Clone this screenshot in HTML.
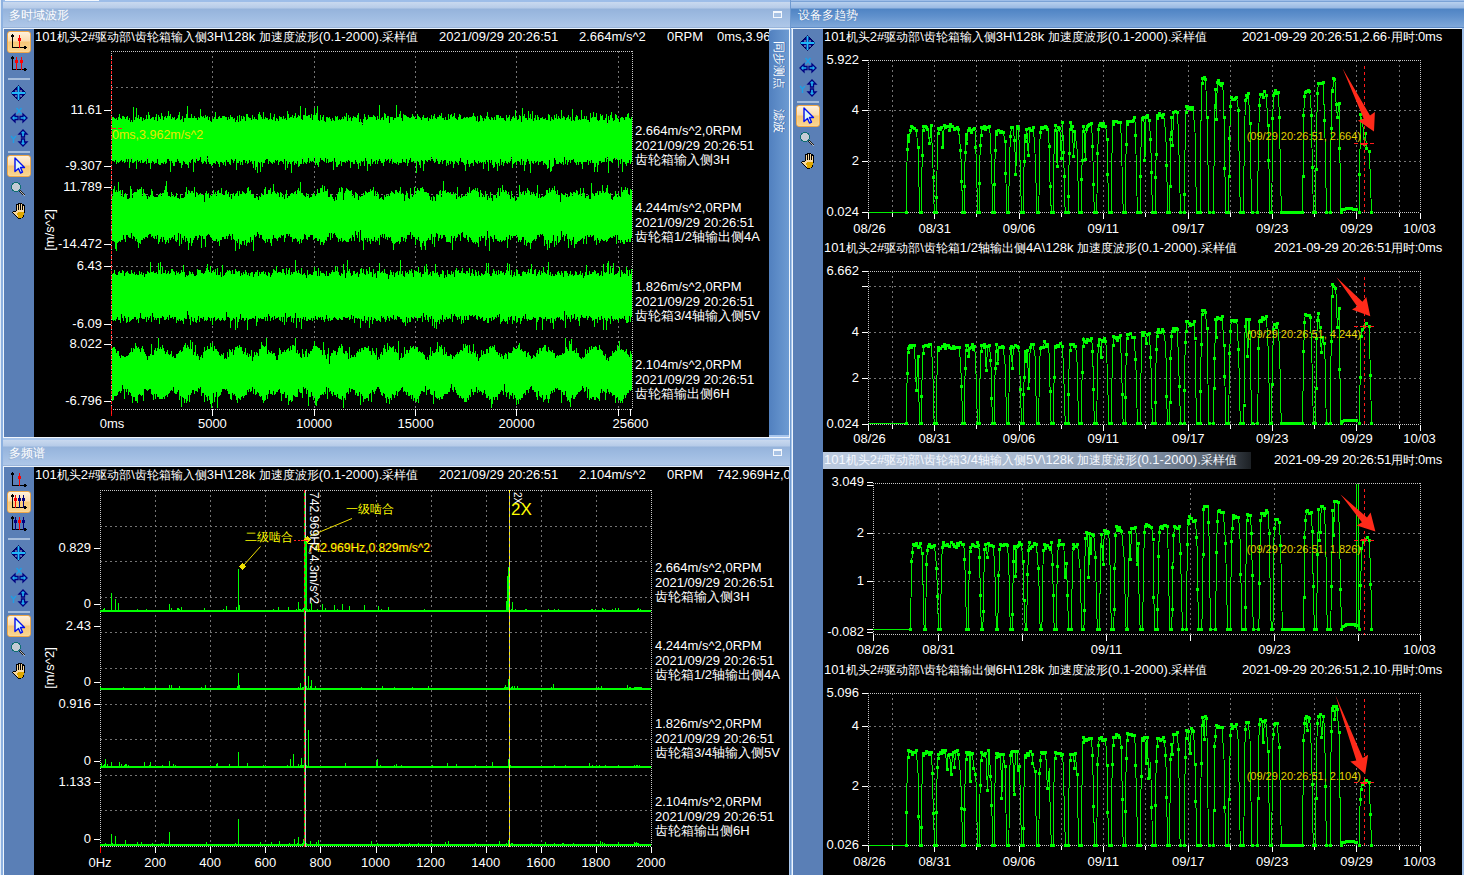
<!DOCTYPE html><html><head><meta charset="utf-8"><style>
html,body{margin:0;padding:0;width:1464px;height:875px;overflow:hidden;background:#a4c2e8;font-family:"Liberation Sans",sans-serif;}
.t{position:absolute;white-space:pre;line-height:15px;font-size:13px;}
.t i{font-style:normal;font-size:12px;}
.t.c13 i{font-size:13.2px;}
svg{position:absolute;left:0;top:0;}
</style></head><body>
<div style="position:absolute;left:0px;top:0px;width:1464px;height:875px;background:#a9c6ec;"></div>
<div style="position:absolute;left:0px;top:0px;width:1464px;height:2px;background:#9dbde8;"></div>
<div style="position:absolute;left:5px;top:0px;width:94px;height:1px;background:#f4f8fd;"></div>
<div style="position:absolute;left:0px;top:0px;width:1px;height:875px;background:#e2ecf8;"></div>
<div style="position:absolute;left:1px;top:0px;width:2px;height:875px;background:#8db1e0;"></div>
<div style="position:absolute;left:3px;top:28px;width:1px;height:410px;background:#eef5fc;"></div>
<div style="position:absolute;left:3px;top:466px;width:1px;height:409px;background:#eef5fc;"></div>
<div style="position:absolute;left:3px;top:2px;width:787px;height:25px;background:linear-gradient(to bottom,#c9d9ef 0px,#b6cbe8 6px,#95b3db 7px,#9ebbe1 14px,#aec7e8 25px);"></div>
<div style="position:absolute;left:3px;top:440px;width:787px;height:25px;background:linear-gradient(to bottom,#c9d9ef 0px,#b6cbe8 6px,#95b3db 7px,#9ebbe1 14px,#aec7e8 25px);"></div>
<div style="position:absolute;left:791px;top:2px;width:673px;height:25px;background:linear-gradient(to bottom,#b8d0ee 0px,#98b8e2 6px,#4f84c4 7px,#5f90cc 14px,#7fa8da 25px);"></div>
<div style="position:absolute;left:791px;top:1px;width:673px;height:1px;background:#7aa2d6;"></div>
<div style="position:absolute;left:790px;top:0px;width:1px;height:875px;background:#6f9ad0;"></div>
<div style="position:absolute;left:3px;top:27px;width:787px;height:1px;background:#98b4da;"></div>
<div style="position:absolute;left:3px;top:28px;width:787px;height:1px;background:#eaf2fb;"></div>
<div style="position:absolute;left:3px;top:465px;width:787px;height:1px;background:#98b4da;"></div>
<div style="position:absolute;left:3px;top:466px;width:787px;height:1px;background:#eaf2fb;"></div>
<div style="position:absolute;left:791px;top:27px;width:673px;height:1px;background:#5e8cc8;"></div>
<div style="position:absolute;left:791px;top:28px;width:673px;height:1px;background:#e6f0fb;"></div>
<div style="position:absolute;left:3px;top:437px;width:787px;height:1px;background:#f2f7fd;"></div>
<div style="position:absolute;left:789px;top:28px;width:1px;height:410px;background:#eef5fc;"></div>
<div style="position:absolute;left:792px;top:28px;width:1px;height:847px;background:#eef5fc;"></div>
<div style="position:absolute;left:4px;top:29px;width:30px;height:408px;background:#5a7fb6;"></div>
<div style="position:absolute;left:34px;top:29px;width:735px;height:408px;background:#000;"></div>
<div style="position:absolute;left:4px;top:467px;width:30px;height:408px;background:#5a7fb6;"></div>
<div style="position:absolute;left:34px;top:467px;width:755px;height:408px;background:#000;"></div>
<div style="position:absolute;left:793px;top:29px;width:30px;height:846px;background:#5a7fb6;"></div>
<div style="position:absolute;left:823px;top:29px;width:639px;height:846px;background:#000;"></div>
<div style="position:absolute;left:1462px;top:28px;width:2px;height:847px;background:#9dbde6;"></div>
<div style="position:absolute;left:769px;top:30px;width:20px;height:405px;background:linear-gradient(to right,#5180bf,#6d9bd2);border-top-left-radius:4px;"></div>
<div class="t" style="left:779px;top:65px;transform:translate(-50%,-50%) rotate(90deg);color:#fff;text-shadow:0 -1px 0 #3c68a8"><i>同步测点</i></div>
<div class="t" style="left:779px;top:120.5px;transform:translate(-50%,-50%) rotate(90deg);color:#fff;text-shadow:0 -1px 0 #3c68a8"><i>滤波</i></div>
<div class="t" style="left:9px;top:7px;color:#fff;text-shadow:-1px 1px 0 #98b0d0"><i>多时域波形</i></div>
<div class="t" style="left:9px;top:445px;color:#fff;text-shadow:-1px 1px 0 #98b0d0"><i>多频谱</i></div>
<div class="t" style="left:798px;top:7px;color:#fff;text-shadow:0 0 1px #3a6aa8"><i>设备多趋势</i></div>
<div style="position:absolute;left:773px;top:11px;width:7px;height:4px;border:1px solid #f4f8fd;border-top-width:2px;background:#a8c2e4"></div>
<div style="position:absolute;left:773px;top:449px;width:7px;height:4px;border:1px solid #f4f8fd;border-top-width:2px;background:#a8c2e4"></div>
<div style="position:absolute;left:7px;top:31px;width:22px;height:20px;border:1px solid #f0a848;border-radius:3px;background:linear-gradient(to bottom,#fff1dc 0%,#fbdcae 45%,#f8c878 50%,#f9d590 100%);box-shadow:inset 0 0 1px #fff"></div>
<div style="position:absolute;left:8px;top:78px;width:22px;height:2px;background:#a6bddc;"></div>
<div style="position:absolute;left:8px;top:151px;width:22px;height:2px;background:#a6bddc;"></div>
<div style="position:absolute;left:7px;top:155px;width:22px;height:20px;border:1px solid #f0a848;border-radius:3px;background:linear-gradient(to bottom,#fff1dc 0%,#fbdcae 45%,#f8c878 50%,#f9d590 100%);box-shadow:inset 0 0 1px #fff"></div>
<div style="position:absolute;left:7px;top:491px;width:22px;height:20px;border:1px solid #f0a848;border-radius:3px;background:linear-gradient(to bottom,#fff1dc 0%,#fbdcae 45%,#f8c878 50%,#f9d590 100%);box-shadow:inset 0 0 1px #fff"></div>
<div style="position:absolute;left:8px;top:538px;width:22px;height:2px;background:#a6bddc;"></div>
<div style="position:absolute;left:8px;top:611px;width:22px;height:2px;background:#a6bddc;"></div>
<div style="position:absolute;left:7px;top:615px;width:22px;height:20px;border:1px solid #f0a848;border-radius:3px;background:linear-gradient(to bottom,#fff1dc 0%,#fbdcae 45%,#f8c878 50%,#f9d590 100%);box-shadow:inset 0 0 1px #fff"></div>
<div style="position:absolute;left:797px;top:101px;width:22px;height:2px;background:#a6bddc;"></div>
<div style="position:absolute;left:796px;top:105px;width:22px;height:20px;border:1px solid #f0a848;border-radius:3px;background:linear-gradient(to bottom,#fff1dc 0%,#fbdcae 45%,#f8c878 50%,#f9d590 100%);box-shadow:inset 0 0 1px #fff"></div>
<div style="position:absolute;left:823px;top:452px;width:428px;height:17px;background:linear-gradient(to right,#bccbe0 0%,#a9b9cf 45%,#8696ac 75%,#505a66 92%,#1c2024 100%);"></div>
<svg width="1464" height="875" viewBox="0 0 1464 875" shape-rendering="crispEdges"><path d="M12.5 34V47.5H27" stroke="#000" stroke-width="1.5" fill="none"/><path d="M11.0 36h3M25 46.0v3" stroke="#000" stroke-width="1.2"/><path d="M19.5 34.5V47.5" stroke="#f00" stroke-width="1.5"/><rect x="17.7" y="38" width="3.6" height="2.6" fill="#f00"/><path d="M12.5 56V69.5H27" stroke="#000" stroke-width="1.5" fill="none"/><path d="M11.0 58h3M25 68.0v3" stroke="#000" stroke-width="1.2"/><path d="M16.5 56.5V69.5" stroke="#f00" stroke-width="1.5"/><rect x="14.7" y="60" width="3.6" height="2.6" fill="#f00"/><path d="M21.5 56.5V69.5" stroke="#f00" stroke-width="1.5"/><rect x="19.7" y="60" width="3.6" height="2.6" fill="#f00"/><path d="M18.5 85.5L26.0 93L18.5 100.5L11.0 93Z" fill="#000080" stroke="#000050" stroke-width="1" shape-rendering="auto"/><path d="M18.5 86V100M11.5 93H25.5" stroke="#20b8f8" stroke-width="1.8" shape-rendering="auto"/><path d="M15.0 89.5h2v2h-2zM20.0 89.5h2v2h-2zM15.0 94.5h2v2h-2zM20.0 94.5h2v2h-2z" fill="#5868a8"/><path d="M16.5 108l5 6M21.5 108l-5 6" stroke="#1e9ee6" stroke-width="1.4" shape-rendering="auto"/><path d="M11 118L15 114V116.5H18V119.5H15V122Z M27 118L23 114V116.5H20V119.5H23V122Z" fill="#20b0f0" stroke="#000080" stroke-width="1.3" shape-rendering="auto"/><path d="M11 136l2.5 3l2.5-3M13.5 139v4" stroke="#1e9ee6" stroke-width="1.4" fill="none" shape-rendering="auto"/><path d="M23 130L19 134H21.5V137H24.5V134H27Z M23 146L19 142H21.5V139H24.5V142H27Z" fill="#20b0f0" stroke="#000080" stroke-width="1.3" shape-rendering="auto"/><path d="M15 158L24.5 167.5H20.5L22.5 172L20.5 173L18.5 168.5L15 171.5Z" fill="#dff8f6" stroke="#0010f0" stroke-width="1.4" stroke-linejoin="round" shape-rendering="auto"/><path d="M19 190L25 195.5" stroke="#202020" stroke-width="2"/><path d="M19 190L25 195.5" stroke="#e0e0e0" stroke-width="0.8"/><circle cx="16" cy="187" r="4.5" fill="#c4ccd4" stroke="#0e6e70" stroke-width="1.2"/><path d="M16 211V205q1-1.5 2 0V210V203.8q1-1.5 2 0V210V204.3q1-1.5 2 0V210V205.5q1-1.5 2 0V213q0 4-3.5 5H18L13 213q-0.5-1.5 1-1.5z" fill="#f8d8a0" stroke="#000" stroke-width="1"/><path d="M17 213q3-2 6.5-1v3q-1 3-3 3h-2z" fill="#e0a800"/><path d="M12.5 472V485.5H27" stroke="#000" stroke-width="1.5" fill="none"/><path d="M11.0 474h3M25 484.0v3" stroke="#000" stroke-width="1.2"/><path d="M19.5 472.5V485.5" stroke="#f00" stroke-width="1.5"/><rect x="17.7" y="476" width="3.6" height="2.6" fill="#f00"/><path d="M12.5 494V507.5H27" stroke="#000" stroke-width="1.5" fill="none"/><path d="M11.0 496h3M25 506.0v3" stroke="#000" stroke-width="1.2"/><path d="M15.5 494.5V507.5" stroke="#f00" stroke-width="1.5"/><rect x="13.7" y="498" width="3.6" height="2.6" fill="#f00"/><path d="M19.5 494.5V507.5" stroke="#000080" stroke-width="1.5"/><rect x="17.7" y="498" width="3.6" height="2.6" fill="#000080"/><path d="M23.5 494.5V507.5" stroke="#000080" stroke-width="1.5"/><rect x="21.7" y="498" width="3.6" height="2.6" fill="#000080"/><path d="M12.5 516V529.5H27" stroke="#000" stroke-width="1.5" fill="none"/><path d="M11.0 518h3M25 528.0v3" stroke="#000" stroke-width="1.2"/><path d="M15.5 516.5V529.5" stroke="#000080" stroke-width="1.5"/><rect x="13.7" y="520" width="3.6" height="2.6" fill="#000080"/><path d="M19.5 516.5V529.5" stroke="#f00" stroke-width="1.5"/><rect x="17.7" y="520" width="3.6" height="2.6" fill="#f00"/><path d="M23.5 516.5V529.5" stroke="#000080" stroke-width="1.5"/><rect x="21.7" y="520" width="3.6" height="2.6" fill="#000080"/><path d="M18.5 545.5L26.0 553L18.5 560.5L11.0 553Z" fill="#000080" stroke="#000050" stroke-width="1" shape-rendering="auto"/><path d="M18.5 546V560M11.5 553H25.5" stroke="#20b8f8" stroke-width="1.8" shape-rendering="auto"/><path d="M15.0 549.5h2v2h-2zM20.0 549.5h2v2h-2zM15.0 554.5h2v2h-2zM20.0 554.5h2v2h-2z" fill="#5868a8"/><path d="M16.5 568l5 6M21.5 568l-5 6" stroke="#1e9ee6" stroke-width="1.4" shape-rendering="auto"/><path d="M11 578L15 574V576.5H18V579.5H15V582Z M27 578L23 574V576.5H20V579.5H23V582Z" fill="#20b0f0" stroke="#000080" stroke-width="1.3" shape-rendering="auto"/><path d="M11 596l2.5 3l2.5-3M13.5 599v4" stroke="#1e9ee6" stroke-width="1.4" fill="none" shape-rendering="auto"/><path d="M23 590L19 594H21.5V597H24.5V594H27Z M23 606L19 602H21.5V599H24.5V602H27Z" fill="#20b0f0" stroke="#000080" stroke-width="1.3" shape-rendering="auto"/><path d="M15 618L24.5 627.5H20.5L22.5 632L20.5 633L18.5 628.5L15 631.5Z" fill="#dff8f6" stroke="#0010f0" stroke-width="1.4" stroke-linejoin="round" shape-rendering="auto"/><path d="M19 650L25 655.5" stroke="#202020" stroke-width="2"/><path d="M19 650L25 655.5" stroke="#e0e0e0" stroke-width="0.8"/><circle cx="16" cy="647" r="4.5" fill="#c4ccd4" stroke="#0e6e70" stroke-width="1.2"/><path d="M16 671V665q1-1.5 2 0V670V663.8q1-1.5 2 0V670V664.3q1-1.5 2 0V670V665.5q1-1.5 2 0V673q0 4-3.5 5H18L13 673q-0.5-1.5 1-1.5z" fill="#f8d8a0" stroke="#000" stroke-width="1"/><path d="M17 673q3-2 6.5-1v3q-1 3-3 3h-2z" fill="#e0a800"/><path d="M807.5 35.5L815.0 43L807.5 50.5L800.0 43Z" fill="#000080" stroke="#000050" stroke-width="1" shape-rendering="auto"/><path d="M807.5 36V50M800.5 43H814.5" stroke="#20b8f8" stroke-width="1.8" shape-rendering="auto"/><path d="M804.0 39.5h2v2h-2zM809.0 39.5h2v2h-2zM804.0 44.5h2v2h-2zM809.0 44.5h2v2h-2z" fill="#5868a8"/><path d="M805.5 58l5 6M810.5 58l-5 6" stroke="#1e9ee6" stroke-width="1.4" shape-rendering="auto"/><path d="M800 68L804 64V66.5H807V69.5H804V72Z M816 68L812 64V66.5H809V69.5H812V72Z" fill="#20b0f0" stroke="#000080" stroke-width="1.3" shape-rendering="auto"/><path d="M800 86l2.5 3l2.5-3M802.5 89v4" stroke="#1e9ee6" stroke-width="1.4" fill="none" shape-rendering="auto"/><path d="M812 80L808 84H810.5V87H813.5V84H816Z M812 96L808 92H810.5V89H813.5V92H816Z" fill="#20b0f0" stroke="#000080" stroke-width="1.3" shape-rendering="auto"/><path d="M804 108L813.5 117.5H809.5L811.5 122L809.5 123L807.5 118.5L804 121.5Z" fill="#dff8f6" stroke="#0010f0" stroke-width="1.4" stroke-linejoin="round" shape-rendering="auto"/><path d="M808 140L814 145.5" stroke="#202020" stroke-width="2"/><path d="M808 140L814 145.5" stroke="#e0e0e0" stroke-width="0.8"/><circle cx="805" cy="137" r="4.5" fill="#c4ccd4" stroke="#0e6e70" stroke-width="1.2"/><path d="M805 161V155q1-1.5 2 0V160V153.8q1-1.5 2 0V160V154.3q1-1.5 2 0V160V155.5q1-1.5 2 0V163q0 4-3.5 5H807L802 163q-0.5-1.5 1-1.5z" fill="#f8d8a0" stroke="#000" stroke-width="1"/><path d="M806 163q3-2 6.5-1v3q-1 3-3 3h-2z" fill="#e0a800"/><path d="M111 87.5H632M111 123.5H632M111 158.5H632M111 194.5H632M111 230.5H632M111 266.5H632M111 302.5H632M111 337.5H632M111 373.5H632" stroke="#747474" stroke-width="1" stroke-dasharray="2 3"/><path d="M212.5 51V409M314.5 51V409M415.5 51V409M516.5 51V409M618.5 51V409" stroke="#747474" stroke-width="1" stroke-dasharray="2 3"/><path d="M111 51.5H632M111 409.5H632M111.5 51V409M632.5 51V409" stroke="#c8c8c8" stroke-width="1" stroke-dasharray="1 1" fill="none"/><path d="M104 110.5H111M104 166.5H111" stroke="#fff" stroke-width="1" fill="none" /><path d="M112 117V117h1V117h1V118h1V119h1V118h1V120h1V117h1V114h1V118h1V119h1V116h1V116h1V117h1V119h1V117h1V116h1V120h1V118h1V122h1V120h1V122h1V107h1V120h1V117h1V108h1V118h1V115h1V119h1V117h1V117h1V121h1V118h1V120h1V119h1V115h1V119h1V112h1V115h1V119h1V118h1V117h1V117h1V120h1V117h1V114h1V121h1V115h1V117h1V119h1V113h1V116h1V120h1V117h1V116h1V118h1V116h1V111h1V116h1V114h1V119h1V117h1V118h1V117h1V120h1V119h1V118h1V115h1V112h1V120h1V119h1V116h1V122h1V118h1V118h1V114h1V106h1V118h1V118h1V118h1V114h1V118h1V118h1V116h1V118h1V118h1V120h1V117h1V118h1V109h1V116h1V117h1V116h1V118h1V115h1V117h1V116h1V120h1V117h1V121h1V122h1V118h1V119h1V117h1V112h1V119h1V119h1V117h1V116h1V118h1V118h1V116h1V116h1V116h1V117h1V117h1V120h1V117h1V119h1V115h1V117h1V117h1V119h1V118h1V122h1V120h1V116h1V122h1V115h1V121h1V116h1V119h1V116h1V117h1V121h1V114h1V114h1V117h1V118h1V118h1V120h1V115h1V119h1V117h1V119h1V119h1V120h1V114h1V112h1V115h1V117h1V119h1V112h1V119h1V117h1V118h1V118h1V120h1V119h1V113h1V119h1V120h1V117h1V114h1V121h1V118h1V119h1V121h1V116h1V117h1V117h1V119h1V116h1V119h1V118h1V120h1V111h1V114h1V118h1V117h1V117h1V115h1V118h1V116h1V113h1V118h1V117h1V115h1V116h1V106h1V119h1V120h1V115h1V115h1V108h1V116h1V116h1V115h1V115h1V118h1V114h1V120h1V115h1V108h1V115h1V113h1V106h1V120h1V121h1V115h1V120h1V117h1V115h1V121h1V122h1V117h1V117h1V118h1V117h1V119h1V121h1V118h1V120h1V121h1V116h1V117h1V116h1V120h1V119h1V120h1V119h1V117h1V119h1V116h1V117h1V113h1V121h1V115h1V118h1V117h1V121h1V118h1V116h1V117h1V117h1V118h1V115h1V113h1V122h1V119h1V122h1V125h1V119h1V114h1V117h1V120h1V119h1V115h1V117h1V117h1V117h1V117h1V115h1V116h1V117h1V120h1V116h1V119h1V105h1V120h1V118h1V117h1V120h1V113h1V114h1V118h1V116h1V116h1V123h1V117h1V117h1V117h1V120h1V118h1V118h1V105h1V117h1V117h1V114h1V111h1V118h1V121h1V114h1V115h1V115h1V116h1V117h1V117h1V118h1V118h1V117h1V114h1V116h1V117h1V119h1V119h1V114h1V116h1V117h1V118h1V120h1V117h1V115h1V118h1V118h1V118h1V117h1V121h1V118h1V119h1V115h1V119h1V116h1V114h1V118h1V119h1V117h1V117h1V115h1V116h1V113h1V118h1V118h1V120h1V117h1V120h1V120h1V114h1V119h1V115h1V114h1V117h1V116h1V113h1V118h1V119h1V120h1V117h1V114h1V115h1V119h1V119h1V118h1V117h1V118h1V117h1V117h1V118h1V117h1V117h1V117h1V116h1V113h1V116h1V117h1V121h1V116h1V122h1V121h1V115h1V116h1V118h1V121h1V118h1V119h1V116h1V112h1V117h1V119h1V120h1V117h1V118h1V120h1V117h1V120h1V115h1V115h1V115h1V118h1V116h1V118h1V118h1V118h1V120h1V121h1V115h1V118h1V117h1V115h1V121h1V119h1V117h1V116h1V118h1V110h1V117h1V120h1V119h1V115h1V116h1V122h1V108h1V116h1V114h1V118h1V118h1V120h1V111h1V118h1V114h1V119h1V111h1V121h1V118h1V115h1V120h1V115h1V117h1V120h1V118h1V118h1V117h1V119h1V119h1V118h1V120h1V120h1V114h1V115h1V121h1V117h1V119h1V120h1V115h1V118h1V114h1V119h1V116h1V118h1V119h1V110h1V118h1V116h1V117h1V120h1V118h1V117h1V115h1V119h1V117h1V121h1V109h1V120h1V121h1V117h1V115h1V116h1V120h1V119h1V120h1V110h1V119h1V119h1V116h1V119h1V116h1V120h1V120h1V122h1V113h1V118h1V117h1V112h1V117h1V117h1V113h1V120h1V121h1V120h1V114h1V116h1V115h1V120h1V120h1V118h1V114h1V124h1V116h1V120h1V115h1V112h1V118h1V121h1V120h1V114h1V115h1V118h1V119h1V122h1V118h1V117h1V117h1V118h1V120h1V117h1V117h1V114h1V113h1V118h1V119h1V117h1V162h-1V164h-1V160h-1V163h-1V163h-1V166h-1V164h-1V162h-1V162h-1V172h-1V159h-1V164h-1V160h-1V166h-1V160h-1V158h-1V160h-1V158h-1V159h-1V163h-1V162h-1V161h-1V161h-1V173h-1V157h-1V162h-1V158h-1V162h-1V162h-1V162h-1V163h-1V161h-1V161h-1V165h-1V172h-1V163h-1V167h-1V172h-1V163h-1V163h-1V160h-1V163h-1V161h-1V165h-1V160h-1V162h-1V162h-1V162h-1V162h-1V169h-1V164h-1V162h-1V162h-1V165h-1V162h-1V165h-1V163h-1V162h-1V159h-1V160h-1V160h-1V163h-1V160h-1V162h-1V165h-1V160h-1V164h-1V157h-1V165h-1V162h-1V164h-1V163h-1V162h-1V164h-1V164h-1V164h-1V160h-1V158h-1V166h-1V167h-1V171h-1V172h-1V160h-1V168h-1V169h-1V165h-1V164h-1V163h-1V165h-1V161h-1V161h-1V162h-1V162h-1V165h-1V161h-1V162h-1V163h-1V161h-1V164h-1V163h-1V161h-1V173h-1V164h-1V161h-1V159h-1V162h-1V165h-1V171h-1V161h-1V165h-1V159h-1V165h-1V162h-1V161h-1V161h-1V165h-1V162h-1V163h-1V164h-1V168h-1V157h-1V161h-1V163h-1V162h-1V164h-1V163h-1V161h-1V163h-1V166h-1V162h-1V165h-1V159h-1V166h-1V163h-1V171h-1V164h-1V162h-1V167h-1V168h-1V165h-1V160h-1V163h-1V160h-1V171h-1V162h-1V160h-1V164h-1V162h-1V169h-1V162h-1V163h-1V162h-1V163h-1V161h-1V164h-1V163h-1V162h-1V160h-1V166h-1V163h-1V163h-1V164h-1V167h-1V164h-1V160h-1V164h-1V171h-1V165h-1V163h-1V162h-1V162h-1V158h-1V161h-1V165h-1V163h-1V162h-1V161h-1V164h-1V168h-1V162h-1V161h-1V164h-1V161h-1V165h-1V163h-1V166h-1V160h-1V160h-1V161h-1V164h-1V160h-1V162h-1V164h-1V164h-1V161h-1V158h-1V162h-1V163h-1V161h-1V159h-1V157h-1V161h-1V160h-1V160h-1V162h-1V161h-1V160h-1V164h-1V171h-1V161h-1V160h-1V168h-1V165h-1V162h-1V161h-1V173h-1V161h-1V163h-1V161h-1V162h-1V162h-1V158h-1V160h-1V163h-1V166h-1V159h-1V163h-1V162h-1V162h-1V159h-1V163h-1V163h-1V163h-1V165h-1V162h-1V164h-1V163h-1V163h-1V162h-1V164h-1V158h-1V161h-1V163h-1V159h-1V160h-1V161h-1V159h-1V162h-1V166h-1V163h-1V163h-1V161h-1V159h-1V161h-1V164h-1V160h-1V164h-1V161h-1V162h-1V164h-1V159h-1V166h-1V164h-1V164h-1V171h-1V161h-1V158h-1V166h-1V161h-1V162h-1V161h-1V166h-1V163h-1V169h-1V164h-1V162h-1V160h-1V164h-1V164h-1V162h-1V162h-1V168h-1V161h-1V160h-1V162h-1V161h-1V163h-1V162h-1V162h-1V162h-1V166h-1V161h-1V164h-1V165h-1V167h-1V167h-1V162h-1V158h-1V170h-1V161h-1V162h-1V162h-1V162h-1V163h-1V159h-1V163h-1V158h-1V162h-1V161h-1V160h-1V160h-1V158h-1V162h-1V167h-1V165h-1V163h-1V165h-1V157h-1V162h-1V161h-1V162h-1V161h-1V163h-1V158h-1V162h-1V164h-1V163h-1V162h-1V164h-1V158h-1V164h-1V164h-1V166h-1V167h-1V161h-1V164h-1V163h-1V165h-1V161h-1V162h-1V173h-1V164h-1V162h-1V164h-1V168h-1V161h-1V170h-1V159h-1V164h-1V162h-1V161h-1V161h-1V162h-1V165h-1V160h-1V161h-1V160h-1V163h-1V162h-1V164h-1V163h-1V162h-1V161h-1V164h-1V159h-1V159h-1V160h-1V163h-1V163h-1V167h-1V162h-1V172h-1V163h-1V162h-1V173h-1V167h-1V170h-1V161h-1V168h-1V164h-1V161h-1V162h-1V160h-1V163h-1V164h-1V161h-1V163h-1V160h-1V160h-1V165h-1V162h-1V165h-1V161h-1V163h-1V163h-1V170h-1V159h-1V161h-1V163h-1V160h-1V159h-1V165h-1V164h-1V162h-1V162h-1V160h-1V166h-1V162h-1V165h-1V163h-1V162h-1V162h-1V167h-1V164h-1V162h-1V161h-1V164h-1V163h-1V163h-1V165h-1V166h-1V164h-1V164h-1V162h-1V156h-1V164h-1V162h-1V161h-1V163h-1V164h-1V162h-1V157h-1V160h-1V161h-1V161h-1V158h-1V163h-1V162h-1V172h-1V159h-1V160h-1V163h-1V162h-1V168h-1V165h-1V164h-1V164h-1V162h-1V161h-1V165h-1V168h-1V163h-1V163h-1V161h-1V159h-1V162h-1V162h-1V166h-1V166h-1V163h-1V161h-1V172h-1V161h-1V159h-1V159h-1V163h-1V164h-1V162h-1V164h-1V163h-1V163h-1V165h-1V165h-1V164h-1V159h-1V163h-1V163h-1V164h-1V162h-1V161h-1V163h-1V169h-1V163h-1V163h-1V158h-1V164h-1V161h-1V162h-1V163h-1V163h-1V160h-1V163h-1V161h-1V162h-1V160h-1V169h-1V161h-1V162h-1V163h-1V163h-1V158h-1V162h-1V168h-1V159h-1V162h-1V159h-1V162h-1V163h-1V161h-1V162h-1V160h-1V161h-1V162h-1V163h-1V162h-1V164h-1V160h-1V162h-1V161h-1V161h-1Z" fill="#00ff00"/><path d="M104 187.5H111M104 244.5H111" stroke="#fff" stroke-width="1" fill="none" /><path d="M112 196V196h1V189h1V186h1V192h1V190h1V192h1V182h1V191h1V190h1V196h1V190h1V197h1V194h1V193h1V195h1V199h1V199h1V198h1V186h1V189h1V198h1V193h1V192h1V192h1V192h1V189h1V190h1V189h1V189h1V187h1V196h1V189h1V193h1V194h1V196h1V199h1V196h1V197h1V195h1V189h1V191h1V196h1V197h1V197h1V197h1V197h1V195h1V194h1V193h1V196h1V193h1V193h1V190h1V186h1V181h1V192h1V196h1V196h1V197h1V192h1V196h1V195h1V197h1V196h1V193h1V198h1V198h1V199h1V194h1V198h1V198h1V198h1V197h1V192h1V187h1V195h1V190h1V191h1V193h1V191h1V191h1V193h1V187h1V197h1V192h1V193h1V195h1V194h1V193h1V195h1V195h1V195h1V202h1V193h1V191h1V194h1V193h1V198h1V195h1V196h1V195h1V190h1V194h1V192h1V196h1V191h1V190h1V193h1V193h1V188h1V195h1V195h1V195h1V191h1V190h1V194h1V192h1V197h1V194h1V199h1V194h1V193h1V196h1V194h1V193h1V191h1V196h1V191h1V194h1V194h1V191h1V192h1V193h1V194h1V193h1V188h1V187h1V191h1V190h1V195h1V194h1V194h1V198h1V198h1V196h1V197h1V200h1V196h1V197h1V193h1V195h1V195h1V189h1V187h1V195h1V194h1V190h1V190h1V188h1V194h1V192h1V184h1V191h1V193h1V194h1V192h1V193h1V197h1V192h1V193h1V197h1V195h1V199h1V194h1V190h1V198h1V196h1V196h1V194h1V193h1V193h1V194h1V192h1V191h1V195h1V190h1V188h1V191h1V182h1V193h1V193h1V195h1V196h1V197h1V193h1V196h1V194h1V198h1V197h1V197h1V195h1V193h1V194h1V196h1V195h1V189h1V193h1V193h1V188h1V188h1V185h1V192h1V186h1V191h1V191h1V189h1V197h1V197h1V194h1V195h1V197h1V199h1V201h1V197h1V200h1V194h1V192h1V188h1V192h1V187h1V188h1V200h1V193h1V191h1V188h1V189h1V190h1V191h1V191h1V190h1V196h1V195h1V198h1V192h1V193h1V195h1V200h1V196h1V197h1V196h1V196h1V193h1V195h1V191h1V192h1V193h1V192h1V192h1V189h1V191h1V190h1V187h1V196h1V191h1V196h1V192h1V194h1V199h1V198h1V197h1V199h1V200h1V195h1V197h1V195h1V196h1V194h1V196h1V193h1V191h1V192h1V193h1V194h1V190h1V190h1V192h1V193h1V191h1V187h1V194h1V193h1V194h1V201h1V195h1V191h1V193h1V198h1V199h1V188h1V195h1V197h1V195h1V187h1V194h1V191h1V188h1V190h1V191h1V188h1V188h1V187h1V189h1V192h1V192h1V192h1V193h1V193h1V196h1V200h1V197h1V201h1V196h1V197h1V201h1V195h1V194h1V195h1V191h1V190h1V197h1V191h1V181h1V191h1V190h1V193h1V192h1V192h1V193h1V192h1V195h1V195h1V192h1V194h1V193h1V199h1V187h1V197h1V196h1V198h1V195h1V197h1V196h1V196h1V194h1V196h1V192h1V193h1V187h1V193h1V191h1V190h1V189h1V190h1V188h1V191h1V188h1V192h1V197h1V190h1V193h1V197h1V195h1V197h1V191h1V195h1V200h1V196h1V198h1V192h1V198h1V201h1V195h1V195h1V195h1V198h1V192h1V188h1V196h1V188h1V192h1V185h1V190h1V192h1V190h1V191h1V195h1V192h1V195h1V199h1V191h1V197h1V198h1V196h1V201h1V200h1V197h1V197h1V185h1V192h1V195h1V192h1V191h1V195h1V191h1V193h1V188h1V190h1V191h1V195h1V192h1V195h1V192h1V194h1V196h1V193h1V185h1V198h1V194h1V198h1V197h1V196h1V197h1V196h1V195h1V190h1V190h1V193h1V188h1V192h1V190h1V188h1V190h1V186h1V191h1V195h1V190h1V195h1V195h1V202h1V193h1V194h1V195h1V195h1V193h1V197h1V194h1V197h1V196h1V192h1V193h1V196h1V192h1V192h1V193h1V190h1V191h1V195h1V194h1V188h1V196h1V193h1V188h1V193h1V198h1V196h1V196h1V195h1V199h1V199h1V183h1V193h1V194h1V196h1V193h1V193h1V191h1V195h1V191h1V191h1V193h1V185h1V191h1V193h1V192h1V188h1V185h1V193h1V194h1V193h1V199h1V200h1V197h1V196h1V191h1V194h1V197h1V193h1V196h1V197h1V187h1V192h1V190h1V190h1V187h1V190h1V188h1V194h1V195h1V189h1V190h1V238h-1V242h-1V242h-1V239h-1V242h-1V242h-1V240h-1V244h-1V244h-1V242h-1V240h-1V243h-1V240h-1V240h-1V235h-1V244h-1V235h-1V237h-1V236h-1V238h-1V238h-1V237h-1V238h-1V239h-1V241h-1V242h-1V240h-1V241h-1V241h-1V240h-1V239h-1V241h-1V243h-1V240h-1V238h-1V245h-1V240h-1V241h-1V235h-1V236h-1V237h-1V235h-1V237h-1V237h-1V235h-1V244h-1V236h-1V239h-1V244h-1V238h-1V239h-1V240h-1V241h-1V241h-1V242h-1V244h-1V244h-1V248h-1V237h-1V240h-1V245h-1V241h-1V239h-1V248h-1V239h-1V234h-1V236h-1V241h-1V235h-1V237h-1V231h-1V240h-1V242h-1V243h-1V236h-1V245h-1V241h-1V247h-1V235h-1V241h-1V243h-1V243h-1V248h-1V240h-1V250h-1V244h-1V240h-1V246h-1V236h-1V234h-1V235h-1V234h-1V237h-1V235h-1V235h-1V239h-1V241h-1V239h-1V240h-1V241h-1V243h-1V249h-1V243h-1V242h-1V243h-1V246h-1V240h-1V245h-1V237h-1V237h-1V240h-1V242h-1V240h-1V242h-1V237h-1V235h-1V236h-1V236h-1V236h-1V238h-1V236h-1V240h-1V235h-1V239h-1V248h-1V237h-1V240h-1V241h-1V240h-1V241h-1V242h-1V240h-1V242h-1V241h-1V241h-1V239h-1V239h-1V235h-1V242h-1V239h-1V237h-1V236h-1V251h-1V238h-1V230h-1V240h-1V246h-1V236h-1V238h-1V238h-1V236h-1V241h-1V237h-1V247h-1V243h-1V242h-1V244h-1V242h-1V243h-1V242h-1V240h-1V238h-1V237h-1V242h-1V240h-1V235h-1V238h-1V238h-1V237h-1V232h-1V233h-1V241h-1V235h-1V234h-1V237h-1V238h-1V241h-1V236h-1V238h-1V250h-1V236h-1V243h-1V242h-1V242h-1V242h-1V242h-1V237h-1V235h-1V235h-1V238h-1V239h-1V235h-1V238h-1V241h-1V234h-1V233h-1V237h-1V247h-1V237h-1V244h-1V234h-1V240h-1V240h-1V238h-1V240h-1V241h-1V250h-1V246h-1V241h-1V243h-1V250h-1V247h-1V241h-1V237h-1V240h-1V239h-1V245h-1V237h-1V237h-1V235h-1V239h-1V232h-1V235h-1V235h-1V235h-1V239h-1V242h-1V238h-1V241h-1V237h-1V237h-1V242h-1V244h-1V241h-1V242h-1V242h-1V243h-1V244h-1V250h-1V243h-1V241h-1V237h-1V238h-1V237h-1V240h-1V237h-1V239h-1V234h-1V238h-1V234h-1V237h-1V235h-1V245h-1V238h-1V241h-1V240h-1V242h-1V237h-1V241h-1V241h-1V239h-1V244h-1V241h-1V238h-1V242h-1V238h-1V240h-1V238h-1V250h-1V241h-1V240h-1V230h-1V242h-1V232h-1V238h-1V235h-1V231h-1V241h-1V237h-1V235h-1V241h-1V238h-1V239h-1V242h-1V242h-1V242h-1V241h-1V240h-1V241h-1V242h-1V238h-1V241h-1V239h-1V242h-1V238h-1V237h-1V235h-1V233h-1V234h-1V238h-1V233h-1V240h-1V233h-1V237h-1V237h-1V241h-1V240h-1V243h-1V245h-1V242h-1V242h-1V245h-1V239h-1V241h-1V241h-1V238h-1V238h-1V239h-1V240h-1V235h-1V235h-1V235h-1V237h-1V237h-1V240h-1V239h-1V235h-1V234h-1V239h-1V240h-1V243h-1V239h-1V244h-1V241h-1V242h-1V239h-1V238h-1V239h-1V239h-1V242h-1V237h-1V237h-1V234h-1V236h-1V234h-1V234h-1V238h-1V242h-1V235h-1V236h-1V235h-1V238h-1V237h-1V238h-1V241h-1V239h-1V238h-1V238h-1V235h-1V239h-1V246h-1V243h-1V239h-1V239h-1V242h-1V239h-1V243h-1V241h-1V240h-1V239h-1V235h-1V235h-1V238h-1V234h-1V232h-1V236h-1V237h-1V235h-1V251h-1V240h-1V242h-1V237h-1V243h-1V242h-1V243h-1V246h-1V240h-1V245h-1V241h-1V241h-1V245h-1V244h-1V249h-1V239h-1V243h-1V241h-1V251h-1V240h-1V239h-1V234h-1V240h-1V236h-1V234h-1V236h-1V239h-1V236h-1V239h-1V239h-1V237h-1V237h-1V240h-1V240h-1V246h-1V241h-1V242h-1V239h-1V241h-1V241h-1V241h-1V240h-1V238h-1V237h-1V235h-1V234h-1V235h-1V236h-1V247h-1V239h-1V239h-1V236h-1V248h-1V236h-1V235h-1V238h-1V240h-1V236h-1V236h-1V238h-1V240h-1V243h-1V246h-1V238h-1V243h-1V250h-1V241h-1V238h-1V242h-1V236h-1V240h-1V238h-1V244h-1V234h-1V246h-1V233h-1V240h-1V242h-1V241h-1V235h-1V239h-1V237h-1V238h-1V240h-1V238h-1V243h-1V240h-1V242h-1V244h-1V240h-1V237h-1V242h-1V237h-1V239h-1V242h-1V244h-1V235h-1V239h-1V236h-1V239h-1V238h-1V236h-1V237h-1V234h-1V234h-1V235h-1V238h-1V237h-1V237h-1V239h-1V238h-1V240h-1V240h-1V244h-1V243h-1V248h-1V242h-1V239h-1V241h-1V237h-1V236h-1V239h-1V233h-1V238h-1V238h-1V237h-1V235h-1V235h-1V242h-1V239h-1V235h-1V240h-1V240h-1V242h-1V241h-1V242h-1V243h-1V251h-1V249h-1V242h-1V241h-1V241h-1Z" fill="#00ff00"/><path d="M104 266.5H111M104 324.5H111" stroke="#fff" stroke-width="1" fill="none" /><path d="M112 274V274h1V273h1V270h1V274h1V275h1V275h1V272h1V271h1V273h1V273h1V270h1V271h1V276h1V273h1V272h1V271h1V273h1V274h1V274h1V270h1V273h1V274h1V272h1V275h1V274h1V275h1V275h1V271h1V274h1V272h1V275h1V273h1V277h1V274h1V274h1V271h1V272h1V273h1V262h1V272h1V272h1V271h1V273h1V273h1V272h1V274h1V263h1V270h1V262h1V274h1V267h1V273h1V273h1V270h1V274h1V273h1V271h1V274h1V273h1V269h1V269h1V271h1V272h1V275h1V271h1V273h1V272h1V274h1V273h1V270h1V272h1V265h1V272h1V277h1V275h1V276h1V275h1V271h1V272h1V274h1V272h1V274h1V276h1V276h1V275h1V269h1V270h1V270h1V270h1V273h1V273h1V274h1V273h1V271h1V268h1V264h1V270h1V272h1V266h1V273h1V272h1V270h1V272h1V269h1V275h1V268h1V275h1V275h1V272h1V277h1V265h1V276h1V275h1V273h1V272h1V270h1V271h1V270h1V271h1V274h1V270h1V274h1V274h1V269h1V271h1V272h1V271h1V271h1V276h1V273h1V275h1V272h1V274h1V270h1V272h1V275h1V273h1V276h1V273h1V272h1V272h1V277h1V274h1V272h1V272h1V270h1V276h1V272h1V274h1V272h1V272h1V271h1V274h1V272h1V275h1V276h1V272h1V273h1V277h1V275h1V273h1V269h1V270h1V271h1V266h1V273h1V272h1V272h1V272h1V273h1V269h1V269h1V273h1V275h1V268h1V274h1V270h1V268h1V275h1V272h1V274h1V272h1V272h1V260h1V271h1V273h1V270h1V273h1V274h1V268h1V275h1V274h1V273h1V275h1V278h1V270h1V275h1V274h1V274h1V275h1V275h1V272h1V267h1V271h1V271h1V276h1V268h1V276h1V271h1V273h1V273h1V273h1V274h1V276h1V271h1V276h1V276h1V273h1V274h1V272h1V270h1V272h1V272h1V266h1V271h1V267h1V272h1V275h1V276h1V273h1V274h1V264h1V270h1V278h1V273h1V260h1V271h1V269h1V273h1V276h1V275h1V271h1V271h1V274h1V273h1V272h1V277h1V274h1V269h1V268h1V273h1V269h1V274h1V275h1V269h1V271h1V274h1V267h1V272h1V272h1V277h1V269h1V274h1V273h1V278h1V271h1V271h1V263h1V273h1V272h1V271h1V273h1V269h1V273h1V274h1V274h1V279h1V275h1V270h1V272h1V275h1V272h1V277h1V273h1V272h1V271h1V275h1V271h1V260h1V274h1V271h1V276h1V277h1V271h1V273h1V272h1V274h1V270h1V271h1V269h1V273h1V277h1V270h1V271h1V271h1V272h1V267h1V273h1V272h1V277h1V274h1V274h1V266h1V272h1V264h1V269h1V275h1V274h1V272h1V276h1V271h1V271h1V273h1V264h1V273h1V272h1V275h1V277h1V274h1V274h1V270h1V271h1V278h1V275h1V277h1V270h1V274h1V274h1V275h1V271h1V274h1V272h1V277h1V270h1V268h1V271h1V270h1V273h1V273h1V271h1V268h1V273h1V273h1V274h1V271h1V271h1V273h1V268h1V276h1V273h1V269h1V274h1V276h1V270h1V272h1V276h1V271h1V275h1V276h1V273h1V274h1V275h1V274h1V271h1V263h1V273h1V263h1V274h1V276h1V276h1V273h1V269h1V271h1V274h1V271h1V275h1V270h1V274h1V271h1V271h1V273h1V272h1V275h1V273h1V270h1V263h1V271h1V264h1V275h1V270h1V277h1V275h1V272h1V276h1V269h1V270h1V274h1V274h1V276h1V276h1V272h1V271h1V272h1V272h1V274h1V272h1V269h1V273h1V269h1V264h1V274h1V274h1V270h1V269h1V276h1V274h1V272h1V270h1V275h1V271h1V273h1V267h1V272h1V273h1V274h1V270h1V262h1V275h1V272h1V276h1V274h1V276h1V276h1V274h1V275h1V272h1V271h1V273h1V275h1V271h1V273h1V277h1V271h1V271h1V271h1V273h1V276h1V274h1V271h1V275h1V274h1V276h1V275h1V271h1V272h1V275h1V275h1V274h1V271h1V275h1V273h1V278h1V276h1V272h1V265h1V275h1V275h1V271h1V274h1V274h1V272h1V272h1V270h1V271h1V274h1V273h1V273h1V276h1V275h1V271h1V276h1V264h1V272h1V273h1V272h1V263h1V261h1V274h1V266h1V273h1V268h1V263h1V275h1V274h1V274h1V273h1V272h1V267h1V277h1V270h1V272h1V274h1V273h1V274h1V267h1V270h1V276h1V270h1V274h1V269h1V317h-1V322h-1V316h-1V322h-1V323h-1V323h-1V320h-1V316h-1V319h-1V318h-1V319h-1V319h-1V318h-1V322h-1V320h-1V319h-1V320h-1V319h-1V321h-1V319h-1V316h-1V324h-1V319h-1V318h-1V321h-1V330h-1V320h-1V318h-1V330h-1V319h-1V316h-1V320h-1V320h-1V317h-1V323h-1V319h-1V319h-1V327h-1V320h-1V321h-1V318h-1V317h-1V316h-1V318h-1V320h-1V316h-1V318h-1V318h-1V318h-1V317h-1V315h-1V318h-1V326h-1V321h-1V317h-1V319h-1V320h-1V314h-1V318h-1V319h-1V315h-1V322h-1V319h-1V317h-1V319h-1V315h-1V328h-1V311h-1V321h-1V320h-1V319h-1V320h-1V317h-1V318h-1V317h-1V318h-1V321h-1V319h-1V329h-1V323h-1V318h-1V323h-1V319h-1V319h-1V319h-1V321h-1V317h-1V319h-1V319h-1V330h-1V318h-1V317h-1V317h-1V320h-1V322h-1V330h-1V318h-1V318h-1V317h-1V319h-1V320h-1V320h-1V320h-1V319h-1V321h-1V319h-1V314h-1V319h-1V316h-1V318h-1V321h-1V324h-1V318h-1V318h-1V322h-1V323h-1V316h-1V321h-1V320h-1V324h-1V316h-1V317h-1V320h-1V317h-1V324h-1V321h-1V322h-1V321h-1V319h-1V321h-1V322h-1V324h-1V314h-1V317h-1V315h-1V318h-1V317h-1V319h-1V320h-1V317h-1V321h-1V318h-1V318h-1V323h-1V323h-1V318h-1V320h-1V321h-1V321h-1V317h-1V318h-1V319h-1V317h-1V316h-1V320h-1V319h-1V315h-1V316h-1V317h-1V315h-1V316h-1V316h-1V315h-1V320h-1V320h-1V316h-1V320h-1V316h-1V323h-1V320h-1V324h-1V316h-1V319h-1V317h-1V320h-1V317h-1V316h-1V314h-1V316h-1V322h-1V314h-1V319h-1V318h-1V319h-1V319h-1V317h-1V320h-1V319h-1V322h-1V315h-1V320h-1V319h-1V324h-1V320h-1V322h-1V329h-1V322h-1V328h-1V319h-1V326h-1V316h-1V319h-1V317h-1V322h-1V320h-1V315h-1V320h-1V317h-1V313h-1V322h-1V316h-1V318h-1V318h-1V318h-1V321h-1V318h-1V316h-1V317h-1V319h-1V318h-1V317h-1V322h-1V322h-1V318h-1V323h-1V317h-1V326h-1V322h-1V323h-1V322h-1V319h-1V319h-1V317h-1V317h-1V316h-1V320h-1V319h-1V320h-1V315h-1V319h-1V318h-1V317h-1V321h-1V318h-1V316h-1V320h-1V322h-1V319h-1V317h-1V318h-1V316h-1V322h-1V321h-1V320h-1V321h-1V321h-1V319h-1V318h-1V320h-1V324h-1V317h-1V320h-1V328h-1V317h-1V321h-1V320h-1V323h-1V316h-1V321h-1V321h-1V319h-1V328h-1V319h-1V318h-1V319h-1V318h-1V318h-1V323h-1V316h-1V319h-1V315h-1V319h-1V320h-1V317h-1V318h-1V318h-1V318h-1V317h-1V317h-1V320h-1V320h-1V319h-1V318h-1V320h-1V320h-1V319h-1V318h-1V317h-1V318h-1V320h-1V320h-1V321h-1V318h-1V321h-1V319h-1V315h-1V319h-1V322h-1V320h-1V317h-1V320h-1V317h-1V318h-1V317h-1V320h-1V319h-1V316h-1V320h-1V318h-1V321h-1V318h-1V320h-1V320h-1V319h-1V321h-1V321h-1V317h-1V320h-1V317h-1V319h-1V329h-1V318h-1V322h-1V318h-1V318h-1V328h-1V313h-1V318h-1V323h-1V318h-1V322h-1V316h-1V317h-1V317h-1V318h-1V322h-1V313h-1V325h-1V317h-1V322h-1V317h-1V321h-1V320h-1V317h-1V318h-1V318h-1V319h-1V316h-1V320h-1V317h-1V318h-1V321h-1V316h-1V314h-1V321h-1V317h-1V321h-1V317h-1V319h-1V319h-1V319h-1V318h-1V319h-1V318h-1V322h-1V326h-1V316h-1V319h-1V318h-1V318h-1V319h-1V319h-1V319h-1V320h-1V330h-1V318h-1V320h-1V321h-1V318h-1V318h-1V320h-1V314h-1V319h-1V322h-1V328h-1V317h-1V330h-1V319h-1V318h-1V320h-1V321h-1V328h-1V318h-1V317h-1V317h-1V312h-1V320h-1V321h-1V320h-1V318h-1V320h-1V321h-1V320h-1V318h-1V319h-1V320h-1V321h-1V317h-1V318h-1V325h-1V318h-1V321h-1V318h-1V317h-1V320h-1V321h-1V320h-1V321h-1V317h-1V319h-1V318h-1V318h-1V322h-1V316h-1V320h-1V323h-1V322h-1V318h-1V322h-1V321h-1V317h-1V325h-1V319h-1V315h-1V311h-1V319h-1V319h-1V318h-1V324h-1V321h-1V320h-1V321h-1V319h-1V321h-1V320h-1V323h-1V317h-1V317h-1V319h-1V317h-1V318h-1V318h-1V315h-1V320h-1V317h-1V319h-1V320h-1V320h-1V317h-1V316h-1V318h-1V318h-1V324h-1V318h-1V318h-1V320h-1V318h-1V320h-1V317h-1V313h-1V322h-1V316h-1V318h-1V320h-1V317h-1V322h-1V317h-1V319h-1V319h-1V319h-1V318h-1V313h-1V318h-1V323h-1V319h-1V320h-1V317h-1V317h-1V319h-1V319h-1V320h-1V321h-1V322h-1V317h-1V322h-1V323h-1V318h-1V316h-1V321h-1V318h-1V314h-1V323h-1V320h-1V320h-1V317h-1V319h-1V321h-1V320h-1V321h-1V320h-1Z" fill="#00ff00"/><path d="M104 344.5H111M104 401.5H111" stroke="#fff" stroke-width="1" fill="none" /><path d="M112 348V348h1V347h1V347h1V349h1V353h1V351h1V351h1V356h1V358h1V355h1V356h1V356h1V357h1V357h1V356h1V356h1V355h1V353h1V352h1V348h1V352h1V348h1V349h1V343h1V346h1V348h1V347h1V349h1V352h1V348h1V346h1V349h1V352h1V354h1V356h1V360h1V356h1V356h1V354h1V344h1V355h1V355h1V350h1V348h1V351h1V348h1V338h1V349h1V347h1V349h1V345h1V348h1V351h1V354h1V352h1V350h1V354h1V355h1V354h1V351h1V357h1V356h1V358h1V358h1V354h1V354h1V353h1V351h1V350h1V352h1V351h1V347h1V345h1V343h1V348h1V345h1V347h1V349h1V340h1V349h1V342h1V355h1V352h1V345h1V356h1V354h1V356h1V360h1V357h1V355h1V358h1V352h1V347h1V351h1V350h1V346h1V349h1V349h1V343h1V347h1V343h1V351h1V346h1V349h1V349h1V351h1V352h1V355h1V356h1V354h1V355h1V353h1V359h1V358h1V359h1V352h1V357h1V349h1V350h1V352h1V349h1V355h1V350h1V347h1V347h1V346h1V348h1V345h1V347h1V347h1V351h1V354h1V352h1V348h1V355h1V353h1V357h1V354h1V356h1V350h1V361h1V357h1V352h1V355h1V352h1V353h1V356h1V349h1V349h1V342h1V345h1V346h1V347h1V346h1V338h1V354h1V350h1V352h1V353h1V351h1V354h1V353h1V353h1V356h1V360h1V360h1V355h1V348h1V350h1V354h1V352h1V352h1V350h1V352h1V350h1V349h1V348h1V351h1V346h1V350h1V345h1V345h1V346h1V338h1V353h1V350h1V354h1V353h1V357h1V358h1V349h1V354h1V357h1V351h1V349h1V357h1V353h1V354h1V351h1V351h1V349h1V346h1V341h1V346h1V346h1V347h1V348h1V348h1V350h1V350h1V355h1V342h1V350h1V355h1V359h1V354h1V348h1V364h1V356h1V353h1V353h1V350h1V351h1V351h1V355h1V352h1V348h1V346h1V348h1V344h1V346h1V353h1V354h1V351h1V351h1V353h1V359h1V347h1V358h1V355h1V357h1V357h1V355h1V357h1V353h1V351h1V352h1V349h1V352h1V348h1V348h1V350h1V347h1V347h1V348h1V348h1V346h1V351h1V351h1V355h1V348h1V351h1V353h1V355h1V348h1V360h1V357h1V359h1V354h1V352h1V355h1V348h1V345h1V349h1V352h1V343h1V350h1V346h1V347h1V348h1V347h1V346h1V352h1V349h1V352h1V353h1V341h1V360h1V358h1V353h1V358h1V357h1V347h1V354h1V350h1V350h1V353h1V350h1V346h1V348h1V347h1V346h1V349h1V348h1V347h1V347h1V352h1V351h1V352h1V353h1V352h1V354h1V355h1V359h1V360h1V357h1V360h1V355h1V347h1V356h1V351h1V353h1V353h1V352h1V349h1V342h1V352h1V346h1V347h1V345h1V349h1V355h1V347h1V354h1V352h1V356h1V356h1V356h1V354h1V355h1V359h1V356h1V357h1V355h1V354h1V352h1V354h1V352h1V350h1V350h1V351h1V344h1V348h1V344h1V346h1V345h1V353h1V345h1V351h1V354h1V352h1V344h1V353h1V351h1V357h1V354h1V361h1V358h1V357h1V350h1V355h1V351h1V354h1V354h1V349h1V349h1V353h1V347h1V346h1V348h1V346h1V347h1V345h1V350h1V352h1V352h1V355h1V353h1V357h1V354h1V356h1V359h1V355h1V353h1V354h1V359h1V352h1V353h1V353h1V353h1V351h1V347h1V348h1V349h1V349h1V348h1V345h1V343h1V350h1V349h1V351h1V352h1V351h1V351h1V357h1V353h1V352h1V355h1V356h1V359h1V358h1V355h1V356h1V357h1V353h1V350h1V354h1V348h1V348h1V351h1V348h1V347h1V345h1V345h1V351h1V352h1V347h1V350h1V351h1V352h1V350h1V353h1V353h1V358h1V356h1V355h1V356h1V355h1V355h1V355h1V353h1V354h1V353h1V338h1V347h1V349h1V351h1V341h1V344h1V339h1V351h1V351h1V350h1V353h1V348h1V353h1V353h1V357h1V358h1V359h1V357h1V358h1V357h1V349h1V354h1V350h1V353h1V347h1V350h1V346h1V349h1V347h1V347h1V346h1V347h1V350h1V350h1V345h1V349h1V350h1V351h1V355h1V356h1V354h1V360h1V358h1V361h1V357h1V356h1V356h1V351h1V353h1V352h1V350h1V351h1V345h1V348h1V341h1V350h1V349h1V350h1V350h1V352h1V351h1V349h1V354h1V355h1V357h1V351h1V354h1V390h-1V391h-1V390h-1V393h-1V393h-1V395h-1V398h-1V395h-1V399h-1V403h-1V401h-1V403h-1V400h-1V401h-1V397h-1V398h-1V403h-1V395h-1V395h-1V396h-1V393h-1V392h-1V394h-1V392h-1V389h-1V393h-1V400h-1V392h-1V391h-1V393h-1V389h-1V393h-1V401h-1V399h-1V398h-1V397h-1V400h-1V400h-1V397h-1V397h-1V399h-1V398h-1V400h-1V389h-1V398h-1V387h-1V391h-1V392h-1V388h-1V386h-1V390h-1V391h-1V392h-1V392h-1V394h-1V395h-1V397h-1V399h-1V399h-1V395h-1V398h-1V407h-1V402h-1V400h-1V401h-1V397h-1V391h-1V395h-1V395h-1V392h-1V403h-1V390h-1V390h-1V390h-1V388h-1V389h-1V388h-1V392h-1V390h-1V393h-1V391h-1V394h-1V399h-1V403h-1V399h-1V395h-1V399h-1V400h-1V402h-1V395h-1V398h-1V397h-1V396h-1V391h-1V400h-1V397h-1V392h-1V392h-1V390h-1V390h-1V386h-1V387h-1V389h-1V393h-1V390h-1V390h-1V395h-1V393h-1V394h-1V398h-1V398h-1V400h-1V399h-1V404h-1V400h-1V405h-1V398h-1V395h-1V399h-1V393h-1V396h-1V395h-1V399h-1V392h-1V393h-1V397h-1V392h-1V384h-1V395h-1V391h-1V390h-1V392h-1V394h-1V394h-1V400h-1V397h-1V397h-1V400h-1V397h-1V404h-1V408h-1V399h-1V400h-1V396h-1V398h-1V398h-1V394h-1V390h-1V393h-1V395h-1V392h-1V391h-1V392h-1V390h-1V393h-1V387h-1V392h-1V392h-1V395h-1V392h-1V389h-1V397h-1V395h-1V400h-1V398h-1V402h-1V402h-1V402h-1V398h-1V399h-1V398h-1V396h-1V398h-1V395h-1V395h-1V393h-1V390h-1V387h-1V392h-1V390h-1V384h-1V388h-1V392h-1V392h-1V394h-1V394h-1V394h-1V394h-1V396h-1V399h-1V399h-1V397h-1V400h-1V398h-1V399h-1V398h-1V397h-1V391h-1V404h-1V395h-1V395h-1V394h-1V389h-1V390h-1V390h-1V395h-1V386h-1V392h-1V392h-1V391h-1V391h-1V394h-1V396h-1V403h-1V399h-1V402h-1V401h-1V398h-1V401h-1V395h-1V399h-1V395h-1V396h-1V396h-1V392h-1V395h-1V392h-1V391h-1V392h-1V387h-1V388h-1V390h-1V391h-1V392h-1V396h-1V391h-1V395h-1V398h-1V395h-1V394h-1V400h-1V398h-1V404h-1V399h-1V397h-1V403h-1V398h-1V394h-1V393h-1V396h-1V395h-1V392h-1V389h-1V387h-1V387h-1V389h-1V391h-1V394h-1V392h-1V390h-1V402h-1V393h-1V394h-1V401h-1V398h-1V398h-1V399h-1V399h-1V402h-1V396h-1V394h-1V405h-1V392h-1V396h-1V396h-1V393h-1V395h-1V390h-1V390h-1V389h-1V389h-1V392h-1V388h-1V394h-1V392h-1V393h-1V400h-1V398h-1V408h-1V396h-1V400h-1V399h-1V399h-1V398h-1V394h-1V397h-1V395h-1V395h-1V392h-1V396h-1V394h-1V391h-1V392h-1V388h-1V399h-1V387h-1V394h-1V392h-1V395h-1V394h-1V395h-1V395h-1V398h-1V399h-1V401h-1V406h-1V405h-1V396h-1V400h-1V396h-1V392h-1V397h-1V397h-1V406h-1V390h-1V394h-1V388h-1V389h-1V387h-1V398h-1V393h-1V393h-1V392h-1V389h-1V397h-1V397h-1V397h-1V396h-1V395h-1V401h-1V402h-1V400h-1V401h-1V405h-1V395h-1V398h-1V398h-1V392h-1V394h-1V394h-1V401h-1V393h-1V389h-1V390h-1V392h-1V392h-1V394h-1V395h-1V391h-1V395h-1V394h-1V394h-1V390h-1V394h-1V399h-1V395h-1V400h-1V401h-1V403h-1V400h-1V396h-1V397h-1V396h-1V393h-1V392h-1V394h-1V395h-1V389h-1V394h-1V387h-1V391h-1V392h-1V389h-1V392h-1V390h-1V395h-1V395h-1V396h-1V398h-1V396h-1V397h-1V400h-1V399h-1V398h-1V403h-1V400h-1V396h-1V394h-1V395h-1V393h-1V400h-1V399h-1V394h-1V394h-1V391h-1V389h-1V390h-1V389h-1V389h-1V389h-1V392h-1V395h-1V396h-1V397h-1V408h-1V392h-1V397h-1V402h-1V393h-1V403h-1V408h-1V404h-1V400h-1V396h-1V401h-1V397h-1V395h-1V402h-1V393h-1V393h-1V396h-1V387h-1V389h-1V388h-1V392h-1V391h-1V391h-1V394h-1V390h-1V390h-1V393h-1V395h-1V402h-1V395h-1V401h-1V403h-1V399h-1V403h-1V398h-1V397h-1V407h-1V396h-1V400h-1V390h-1V392h-1V394h-1V394h-1V393h-1V387h-1V391h-1V390h-1V391h-1V393h-1V394h-1V397h-1V395h-1V396h-1V399h-1V397h-1V399h-1V399h-1V399h-1V399h-1V397h-1V397h-1V394h-1V399h-1V394h-1V400h-1V395h-1V394h-1V389h-1V389h-1V390h-1V391h-1V390h-1V389h-1V389h-1V401h-1V395h-1V396h-1V395h-1V394h-1V395h-1V403h-1V401h-1V401h-1V397h-1V397h-1V403h-1V396h-1V393h-1V392h-1V395h-1V389h-1V392h-1V389h-1V399h-1V389h-1V385h-1V391h-1V393h-1V391h-1V392h-1V395h-1V396h-1V396h-1V396h-1V400h-1V401h-1Z" fill="#00ff00"/><path d="M212.5 409V416M314.5 409V416M415.5 409V416M516.5 409V416M618.5 409V416M630.5 409V416" stroke="#fff" stroke-width="1" fill="none" /><path d="M111.5 409V416" stroke="#f00" stroke-width="1" fill="none" /><path d="M111.5 56V416" stroke="#ff2020" stroke-width="1" fill="none" stroke-dasharray="3 2"/><path d="M112 128.5H116M118 128.5H122" stroke="#ff2020" stroke-width="1" fill="none" /><path d="M100 526.5H651M100 561.5H651M100 597.5H651M100 632.5H651M100 668.5H651M100 704.5H651M100 739.5H651M100 775.5H651M100 810.5H651" stroke="#747474" stroke-width="1" stroke-dasharray="2 3"/><path d="M155.5 490V846M210.5 490V846M265.5 490V846M320.5 490V846M376.5 490V846M431.5 490V846M486.5 490V846M541.5 490V846M596.5 490V846" stroke="#747474" stroke-width="1" stroke-dasharray="2 3"/><path d="M100 490.5H651M100 846.5H651M100.5 490V846M651.5 490V846" stroke="#c8c8c8" stroke-width="1" stroke-dasharray="1 1" fill="none"/><path d="M94 548.5H100M94 604.5H100" stroke="#fff" stroke-width="1" fill="none" /><path d="M100 611H651" stroke="#00ff00" stroke-width="2"/><path d="M100 611M103.5 611v-2M104.5 611v-3M109.5 611v-1M111.5 611v-18M115.5 611v-12M118.5 611v-8M119.5 611v-1M124.5 611v-1M126.5 611v-1M134.5 611v-1M137.5 611v-2M139.5 611v-1M140.5 611v-1M144.5 611v-1M146.5 611v-2M149.5 611v-1M150.5 611v-1M152.5 611v-1M160.5 611v-1M162.5 611v-1M169.5 611v-7M171.5 611v-3M173.5 611v-1M174.5 611v-1M177.5 611v-3M178.5 611v-3M179.5 611v-2M180.5 611v-1M181.5 611v-4M185.5 611v-1M188.5 611v-1M200.5 611v-1M203.5 611v-1M204.5 611v-3M209.5 611v-1M212.5 611v-1M213.5 611v-1M218.5 611v-1M220.5 611v-1M223.5 611v-2M224.5 611v-1M225.5 611v-1M226.5 611v-5M234.5 611v-1M236.5 611v-4M238.5 611v-42M239.5 611v-6M245.5 611v-1M253.5 611v-1M270.5 611v-1M273.5 611v-2M275.5 611v-1M278.5 611v-4M280.5 611v-1M281.5 611v-1M282.5 611v-1M286.5 611v-1M288.5 611v-4M289.5 611v-1M290.5 611v-1M292.5 611v-1M293.5 611v-1M295.5 611v-1M296.5 611v-2M297.5 611v-1M298.5 611v-9M299.5 611v-2M300.5 611v-2M301.5 611v-1M302.5 611v-2M303.5 611v-3M304.5 611v-2M305.5 611v-2M306.5 611v-2M307.5 611v-2M308.5 611v-1M309.5 611v-2M310.5 611v-1M311.5 611v-8M312.5 611v-1M313.5 611v-1M314.5 611v-1M315.5 611v-1M317.5 611v-2M322.5 611v-7M325.5 611v-3M326.5 611v-1M334.5 611v-6M337.5 611v-2M340.5 611v-1M341.5 611v-1M342.5 611v-7M346.5 611v-1M349.5 611v-5M350.5 611v-1M351.5 611v-1M354.5 611v-1M355.5 611v-1M357.5 611v-1M361.5 611v-1M363.5 611v-1M364.5 611v-6M366.5 611v-1M367.5 611v-1M368.5 611v-1M373.5 611v-1M378.5 611v-5M381.5 611v-2M384.5 611v-1M385.5 611v-1M388.5 611v-4M390.5 611v-1M391.5 611v-1M395.5 611v-1M415.5 611v-1M419.5 611v-1M424.5 611v-2M434.5 611v-1M441.5 611v-1M442.5 611v-1M445.5 611v-1M450.5 611v-1M452.5 611v-1M453.5 611v-1M455.5 611v-1M458.5 611v-1M464.5 611v-1M472.5 611v-1M474.5 611v-1M475.5 611v-1M476.5 611v-1M481.5 611v-1M483.5 611v-1M484.5 611v-1M490.5 611v-1M494.5 611v-1M501.5 611v-1M502.5 611v-1M503.5 611v-1M504.5 611v-1M505.5 611v-1M506.5 611v-10M507.5 611v-35M508.5 611v-44M509.5 611v-2M510.5 611v-1M511.5 611v-2M512.5 611v-9M513.5 611v-1M514.5 611v-1M515.5 611v-2M516.5 611v-1M517.5 611v-1M519.5 611v-1M525.5 611v-2M526.5 611v-2M527.5 611v-1M533.5 611v-1M538.5 611v-1M543.5 611v-1M544.5 611v-1M546.5 611v-1M547.5 611v-1M548.5 611v-2M549.5 611v-1M550.5 611v-1M551.5 611v-1M552.5 611v-1M553.5 611v-1M554.5 611v-2M555.5 611v-1M556.5 611v-1M557.5 611v-1M558.5 611v-2M559.5 611v-1M560.5 611v-1M561.5 611v-1M563.5 611v-1M565.5 611v-1M568.5 611v-1M569.5 611v-1M583.5 611v-1M589.5 611v-1M591.5 611v-2M592.5 611v-2M593.5 611v-1M594.5 611v-1M595.5 611v-2M596.5 611v-1M597.5 611v-1M598.5 611v-1M599.5 611v-1M600.5 611v-1M601.5 611v-1M602.5 611v-3M603.5 611v-2M605.5 611v-2M607.5 611v-1M608.5 611v-1M609.5 611v-1M612.5 611v-2M615.5 611v-3M616.5 611v-1M618.5 611v-3M620.5 611v-1M625.5 611v-1M629.5 611v-1M631.5 611v-1M632.5 611v-1M633.5 611v-1M634.5 611v-1M635.5 611v-1M636.5 611v-1M637.5 611v-2M638.5 611v-3M639.5 611v-1M640.5 611v-2M641.5 611v-1M642.5 611v-1M643.5 611v-1M648.5 611v-1" stroke="#00ff00" stroke-width="1"/><path d="M94 626.5H100M94 682.5H100" stroke="#fff" stroke-width="1" fill="none" /><path d="M100 689H651" stroke="#00ff00" stroke-width="2"/><path d="M100 689M100.5 689v-2M103.5 689v-1M106.5 689v-1M107.5 689v-1M108.5 689v-1M110.5 689v-1M111.5 689v-1M116.5 689v-1M123.5 689v-2M141.5 689v-1M144.5 689v-2M149.5 689v-1M151.5 689v-1M155.5 689v-2M157.5 689v-1M162.5 689v-1M169.5 689v-4M171.5 689v-4M172.5 689v-1M179.5 689v-3M182.5 689v-1M183.5 689v-1M185.5 689v-1M198.5 689v-1M201.5 689v-2M204.5 689v-1M205.5 689v-4M210.5 689v-1M213.5 689v-1M229.5 689v-1M230.5 689v-1M237.5 689v-3M238.5 689v-16M239.5 689v-4M245.5 689v-1M246.5 689v-1M248.5 689v-1M253.5 689v-1M269.5 689v-1M274.5 689v-1M275.5 689v-1M278.5 689v-1M290.5 689v-1M292.5 689v-1M294.5 689v-1M295.5 689v-1M296.5 689v-1M297.5 689v-1M298.5 689v-2M299.5 689v-1M300.5 689v-6M301.5 689v-1M302.5 689v-2M303.5 689v-2M304.5 689v-2M305.5 689v-2M306.5 689v-3M307.5 689v-1M308.5 689v-13M309.5 689v-1M310.5 689v-3M311.5 689v-9M312.5 689v-1M313.5 689v-1M314.5 689v-1M315.5 689v-3M316.5 689v-1M320.5 689v-1M322.5 689v-1M327.5 689v-1M329.5 689v-1M332.5 689v-1M342.5 689v-1M344.5 689v-1M349.5 689v-1M351.5 689v-1M361.5 689v-2M363.5 689v-1M368.5 689v-1M377.5 689v-1M378.5 689v-1M379.5 689v-1M382.5 689v-3M389.5 689v-1M394.5 689v-2M396.5 689v-1M403.5 689v-1M412.5 689v-2M415.5 689v-1M419.5 689v-1M428.5 689v-3M430.5 689v-1M431.5 689v-1M433.5 689v-1M435.5 689v-1M437.5 689v-1M439.5 689v-1M451.5 689v-1M456.5 689v-1M457.5 689v-1M462.5 689v-1M463.5 689v-1M466.5 689v-1M474.5 689v-1M492.5 689v-1M494.5 689v-1M500.5 689v-1M501.5 689v-1M502.5 689v-1M503.5 689v-1M504.5 689v-2M505.5 689v-4M506.5 689v-2M507.5 689v-2M508.5 689v-10M509.5 689v-2M510.5 689v-1M511.5 689v-2M512.5 689v-3M513.5 689v-1M514.5 689v-3M515.5 689v-1M516.5 689v-1M517.5 689v-3M518.5 689v-1M519.5 689v-1M521.5 689v-1M540.5 689v-1M541.5 689v-1M545.5 689v-1M546.5 689v-1M547.5 689v-1M548.5 689v-1M549.5 689v-1M550.5 689v-1M551.5 689v-2M552.5 689v-1M553.5 689v-5M554.5 689v-1M555.5 689v-1M556.5 689v-1M557.5 689v-1M558.5 689v-1M560.5 689v-1M561.5 689v-1M563.5 689v-1M564.5 689v-1M567.5 689v-1M577.5 689v-1M586.5 689v-1M590.5 689v-1M591.5 689v-1M592.5 689v-1M593.5 689v-1M594.5 689v-1M595.5 689v-1M596.5 689v-2M597.5 689v-1M598.5 689v-2M599.5 689v-1M600.5 689v-1M601.5 689v-3M604.5 689v-1M606.5 689v-1M608.5 689v-1M611.5 689v-1M627.5 689v-4M629.5 689v-2M630.5 689v-2M631.5 689v-1M632.5 689v-1M633.5 689v-1M634.5 689v-2M635.5 689v-2M636.5 689v-2M637.5 689v-2M638.5 689v-2M639.5 689v-2M640.5 689v-2M641.5 689v-2M642.5 689v-1M643.5 689v-1M644.5 689v-1M646.5 689v-1M649.5 689v-1" stroke="#00ff00" stroke-width="1"/><path d="M94 704.5H100M94 761.5H100" stroke="#fff" stroke-width="1" fill="none" /><path d="M100 767H651" stroke="#00ff00" stroke-width="2"/><path d="M100 767M100.5 767v-1M101.5 767v-4M102.5 767v-1M103.5 767v-2M104.5 767v-3M105.5 767v-8M106.5 767v-1M107.5 767v-3M108.5 767v-1M110.5 767v-1M111.5 767v-5M112.5 767v-1M114.5 767v-1M116.5 767v-1M117.5 767v-1M119.5 767v-5M120.5 767v-1M121.5 767v-3M123.5 767v-1M124.5 767v-2M125.5 767v-3M126.5 767v-3M127.5 767v-1M128.5 767v-2M129.5 767v-1M135.5 767v-1M137.5 767v-1M139.5 767v-1M141.5 767v-1M144.5 767v-5M147.5 767v-1M149.5 767v-2M150.5 767v-5M152.5 767v-1M154.5 767v-1M159.5 767v-1M162.5 767v-2M167.5 767v-1M169.5 767v-6M171.5 767v-1M173.5 767v-3M175.5 767v-2M178.5 767v-1M181.5 767v-1M192.5 767v-1M196.5 767v-1M197.5 767v-1M200.5 767v-1M206.5 767v-1M211.5 767v-1M213.5 767v-1M216.5 767v-3M217.5 767v-4M218.5 767v-1M223.5 767v-1M228.5 767v-1M229.5 767v-3M237.5 767v-1M238.5 767v-15M247.5 767v-4M258.5 767v-1M261.5 767v-1M262.5 767v-1M263.5 767v-2M276.5 767v-1M281.5 767v-1M286.5 767v-1M287.5 767v-2M290.5 767v-8M292.5 767v-1M293.5 767v-13M294.5 767v-1M295.5 767v-1M296.5 767v-1M297.5 767v-1M298.5 767v-3M299.5 767v-1M300.5 767v-2M301.5 767v-9M302.5 767v-2M303.5 767v-2M304.5 767v-2M305.5 767v-3M306.5 767v-2M307.5 767v-1M308.5 767v-37M309.5 767v-1M310.5 767v-1M311.5 767v-1M312.5 767v-1M313.5 767v-1M314.5 767v-1M315.5 767v-1M316.5 767v-1M317.5 767v-1M337.5 767v-1M342.5 767v-1M345.5 767v-4M347.5 767v-1M351.5 767v-1M352.5 767v-1M353.5 767v-1M354.5 767v-1M363.5 767v-1M376.5 767v-5M377.5 767v-8M380.5 767v-2M388.5 767v-1M389.5 767v-1M394.5 767v-2M395.5 767v-1M396.5 767v-3M397.5 767v-1M401.5 767v-2M402.5 767v-1M406.5 767v-1M409.5 767v-1M410.5 767v-1M413.5 767v-1M416.5 767v-1M432.5 767v-2M434.5 767v-1M439.5 767v-1M440.5 767v-1M441.5 767v-1M447.5 767v-4M452.5 767v-1M453.5 767v-1M456.5 767v-3M464.5 767v-1M475.5 767v-2M492.5 767v-5M499.5 767v-1M501.5 767v-1M502.5 767v-1M503.5 767v-1M504.5 767v-1M505.5 767v-1M506.5 767v-1M507.5 767v-1M508.5 767v-8M509.5 767v-1M510.5 767v-2M511.5 767v-1M512.5 767v-1M513.5 767v-1M514.5 767v-1M515.5 767v-1M516.5 767v-1M517.5 767v-1M518.5 767v-1M520.5 767v-1M532.5 767v-1M535.5 767v-1M537.5 767v-1M542.5 767v-1M545.5 767v-1M546.5 767v-1M547.5 767v-1M548.5 767v-1M549.5 767v-1M550.5 767v-1M551.5 767v-1M552.5 767v-1M553.5 767v-1M554.5 767v-2M555.5 767v-1M556.5 767v-1M557.5 767v-1M558.5 767v-1M559.5 767v-1M560.5 767v-1M561.5 767v-1M563.5 767v-1M565.5 767v-2M566.5 767v-1M569.5 767v-1M577.5 767v-1M581.5 767v-1M589.5 767v-4M591.5 767v-1M592.5 767v-2M593.5 767v-1M594.5 767v-1M595.5 767v-1M596.5 767v-2M597.5 767v-1M598.5 767v-1M599.5 767v-2M600.5 767v-1M601.5 767v-1M602.5 767v-1M603.5 767v-1M605.5 767v-2M608.5 767v-1M611.5 767v-1M613.5 767v-1M615.5 767v-1M618.5 767v-2M624.5 767v-1M631.5 767v-1M632.5 767v-1M633.5 767v-1M634.5 767v-2M635.5 767v-1M636.5 767v-2M637.5 767v-2M638.5 767v-1M639.5 767v-2M640.5 767v-1M641.5 767v-1M642.5 767v-1M643.5 767v-1" stroke="#00ff00" stroke-width="1"/><path d="M94 782.5H100M94 839.5H100" stroke="#fff" stroke-width="1" fill="none" /><path d="M100 845H651" stroke="#00ff00" stroke-width="2"/><path d="M100 845M105.5 845v-2M106.5 845v-1M108.5 845v-1M111.5 845v-11M112.5 845v-2M113.5 845v-1M115.5 845v-9M117.5 845v-1M123.5 845v-1M125.5 845v-5M129.5 845v-1M135.5 845v-1M137.5 845v-3M141.5 845v-3M145.5 845v-1M152.5 845v-2M158.5 845v-1M161.5 845v-2M163.5 845v-2M167.5 845v-1M169.5 845v-13M178.5 845v-1M182.5 845v-1M199.5 845v-1M206.5 845v-3M208.5 845v-1M217.5 845v-1M221.5 845v-1M230.5 845v-1M235.5 845v-2M237.5 845v-1M238.5 845v-26M240.5 845v-1M247.5 845v-1M249.5 845v-1M260.5 845v-3M261.5 845v-1M271.5 845v-3M273.5 845v-1M279.5 845v-4M285.5 845v-1M287.5 845v-1M289.5 845v-2M292.5 845v-1M294.5 845v-6M295.5 845v-1M296.5 845v-1M297.5 845v-2M298.5 845v-8M299.5 845v-1M300.5 845v-1M301.5 845v-1M302.5 845v-2M303.5 845v-6M304.5 845v-2M305.5 845v-8M306.5 845v-2M307.5 845v-1M308.5 845v-1M309.5 845v-1M310.5 845v-4M311.5 845v-1M312.5 845v-1M313.5 845v-1M314.5 845v-1M315.5 845v-1M316.5 845v-3M318.5 845v-5M320.5 845v-1M323.5 845v-1M327.5 845v-1M333.5 845v-1M335.5 845v-1M341.5 845v-1M342.5 845v-1M349.5 845v-1M351.5 845v-1M353.5 845v-1M355.5 845v-1M363.5 845v-1M369.5 845v-1M371.5 845v-4M372.5 845v-1M373.5 845v-1M376.5 845v-1M377.5 845v-2M379.5 845v-1M384.5 845v-1M385.5 845v-1M389.5 845v-1M397.5 845v-1M399.5 845v-2M401.5 845v-1M409.5 845v-2M410.5 845v-1M413.5 845v-1M415.5 845v-1M418.5 845v-2M427.5 845v-1M431.5 845v-2M435.5 845v-1M437.5 845v-1M442.5 845v-1M444.5 845v-1M445.5 845v-3M448.5 845v-4M475.5 845v-2M478.5 845v-1M486.5 845v-1M488.5 845v-1M497.5 845v-1M498.5 845v-1M499.5 845v-4M502.5 845v-1M503.5 845v-1M504.5 845v-1M505.5 845v-1M506.5 845v-2M507.5 845v-1M508.5 845v-5M509.5 845v-3M510.5 845v-1M511.5 845v-2M512.5 845v-2M513.5 845v-1M514.5 845v-1M515.5 845v-1M516.5 845v-1M517.5 845v-1M518.5 845v-1M519.5 845v-1M522.5 845v-1M531.5 845v-2M536.5 845v-1M537.5 845v-1M540.5 845v-1M542.5 845v-1M544.5 845v-1M545.5 845v-3M546.5 845v-1M547.5 845v-1M548.5 845v-1M549.5 845v-1M550.5 845v-1M551.5 845v-1M552.5 845v-1M553.5 845v-1M554.5 845v-2M555.5 845v-1M556.5 845v-1M557.5 845v-1M558.5 845v-1M559.5 845v-1M560.5 845v-1M561.5 845v-1M562.5 845v-2M563.5 845v-2M573.5 845v-2M574.5 845v-1M580.5 845v-1M585.5 845v-1M586.5 845v-1M590.5 845v-1M591.5 845v-1M592.5 845v-1M593.5 845v-1M594.5 845v-1M595.5 845v-1M596.5 845v-1M597.5 845v-1M598.5 845v-1M599.5 845v-1M600.5 845v-4M601.5 845v-1M602.5 845v-3M603.5 845v-1M604.5 845v-2M614.5 845v-1M615.5 845v-1M617.5 845v-1M618.5 845v-3M621.5 845v-1M623.5 845v-1M629.5 845v-1M630.5 845v-1M631.5 845v-1M632.5 845v-1M633.5 845v-1M634.5 845v-3M635.5 845v-2M636.5 845v-3M637.5 845v-2M638.5 845v-2M639.5 845v-1M640.5 845v-1M641.5 845v-1M642.5 845v-1M643.5 845v-1M644.5 845v-1M645.5 845v-1M649.5 845v-1" stroke="#00ff00" stroke-width="1"/><path d="M155.5 847V853M210.5 847V853M265.5 847V853M320.5 847V853M376.5 847V853M431.5 847V853M486.5 847V853M541.5 847V853M596.5 847V853M651.5 847V853" stroke="#fff" stroke-width="1" fill="none" /><path d="M100.5 847V853" stroke="#f00" stroke-width="1" fill="none" /><path d="M304.5 490V847" stroke="#00ee00" stroke-width="1" fill="none" /><path d="M304.5 490V847" stroke="#ff1a1a" stroke-width="1" fill="none" stroke-dasharray="3 3"/><path d="M305.5 490V847" stroke="#c8c8c8" stroke-width="1" fill="none" /><rect x="305" y="541" width="2" height="70" fill="#00ff00"/><path d="M304.5 541V611" stroke="#00ff00" stroke-width="1" fill="none" /><path d="M304.5 490V847" stroke="#ff1a1a" stroke-width="1" fill="none" stroke-dasharray="3 3"/><path d="M509.5 490V847" stroke="#b4b4b4" stroke-width="1" fill="none" /><path d="M509.5 490V847" stroke="#ffee00" stroke-width="1" fill="none" stroke-dasharray="3 3"/><path d="M243.5 565.5L260.5 546.5M310 536L352 518.5" stroke="#f0e000" stroke-width="1" fill="none" shape-rendering="auto"/><path d="M242 563L245.5 566.5L242 570L238.5 566.5Z" fill="#f0e000"/><path d="M307.5 536L311 539.5L307.5 543L304 539.5Z" fill="#f0e000"/><path d="M294 540.5h2M298 540.5h2M301 540.5h7" stroke="#ff2020" stroke-width="1" fill="none" /><path d="M868.5 110.5H1419.6M868.5 161.5H1419.6" stroke="#747474" stroke-width="1" stroke-dasharray="2 3"/><path d="M934.5 59.7V212.4M1019.5 59.7V212.4M1103.5 59.7V212.4M1188.5 59.7V212.4M1272.5 59.7V212.4M1356.5 59.7V212.4M892.5 59.7V212.4M976.5 59.7V212.4M1061.5 59.7V212.4M1145.5 59.7V212.4M1230.5 59.7V212.4M1314.5 59.7V212.4M1399.5 59.7V212.4" stroke="#747474" stroke-width="1" stroke-dasharray="2 3"/><path d="M868 60.5H1420M868 212.5H1420M868.5 60V212M1420.5 60V212" stroke="#c8c8c8" stroke-width="1" stroke-dasharray="1 1" fill="none"/><path d="M862 60.5H868" stroke="#fff" stroke-width="1" fill="none" /><path d="M862 110.5H868" stroke="#fff" stroke-width="1" fill="none" /><path d="M862 161.5H868" stroke="#fff" stroke-width="1" fill="none" /><path d="M862 212.5H868" stroke="#fff" stroke-width="1" fill="none" /><path d="M934.5 213V219M1019.5 213V219M1103.5 213V219M1188.5 213V219M1272.5 213V219M1356.5 213V219M868.5 213V219M1420.5 213V219M892.5 213V217M976.5 213V217M1061.5 213V217M1145.5 213V217M1230.5 213V217M1314.5 213V217M1399.5 213V217" stroke="#fff" stroke-width="1" fill="none" /><path d="M868.5 212.4L906.0 212.4L906.5 197.0L907.2 149.0L908.0 135.4L908.8 141.9L910.4 130.8L911.8 126.9L912.9 127.2L914.3 128.2L916.3 130.3L918.0 147.3L918.8 183.1L919.5 197.2L920.0 212.4L921.0 212.4L921.5 197.0L922.2 155.9L923.0 130.3L923.8 126.9L925.4 126.4L926.6 127.4L927.9 129.9L929.5 143.0L931.1 125.8L932.5 152.7L933.3 177.1L934.0 204.2L934.5 212.4L936.0 212.4L936.5 197.8L937.2 161.2L938.0 133.3L938.8 128.0L939.9 129.3L941.8 127.2L942.9 147.9L944.3 125.2L945.4 127.2L947.4 126.0L948.8 126.0L949.7 130.0L950.9 124.9L952.4 126.9L954.2 129.1L955.7 128.3L957.5 127.5L958.5 129.9L960.8 150.9L961.6 181.0L962.3 197.2L962.8 212.4L964.0 212.4L964.5 186.9L965.2 152.7L966.0 134.2L966.8 143.3L968.0 130.4L969.7 128.3L970.9 130.6L971.9 132.2L973.9 129.1L974.9 128.7L975.8 147.0L976.6 174.4L977.3 198.3L977.8 212.4L979.0 212.4L979.5 183.7L980.2 145.1L981.0 135.5L981.8 127.6L983.0 128.9L984.2 126.8L985.9 129.2L987.2 127.1L988.7 127.7L989.7 126.2L990.9 150.7L991.7 173.8L992.4 196.8L992.9 212.4L994.0 212.4L994.5 184.8L995.2 150.4L996.0 134.3L996.8 131.2L998.7 130.1L1000.2 132.2L1001.7 131.9L1003.5 132.6L1005.0 141.1L1005.8 173.7L1006.5 207.2L1007.0 212.4L1008.5 212.4L1009.0 187.0L1009.7 153.4L1010.5 136.4L1011.3 127.5L1012.8 127.6L1014.6 140.7L1015.8 174.5L1017.0 126.4L1018.2 128.0L1019.7 149.8L1020.5 174.6L1021.2 203.2L1021.7 212.4L1023.0 212.4L1023.5 184.8L1024.2 161.3L1025.0 135.8L1025.8 141.1L1026.8 129.7L1028.3 155.7L1029.8 128.9L1031.7 130.3L1033.4 127.3L1035.0 153.3L1035.8 174.3L1036.5 202.7L1037.0 212.4L1038.5 212.4L1039.0 197.3L1039.7 143.4L1040.5 132.4L1041.3 127.0L1042.4 128.8L1043.7 127.2L1045.1 126.1L1046.5 127.0L1047.9 129.0L1049.3 146.6L1050.1 186.5L1050.8 200.8L1051.3 212.4L1053.0 212.4L1053.5 188.7L1054.2 142.2L1055.0 130.7L1055.8 125.3L1057.1 166.1L1058.1 127.2L1059.8 128.4L1061.4 158.5L1062.7 122.1L1063.5 152.8L1064.3 176.8L1065.0 207.3L1065.5 212.4L1068.0 212.4L1068.5 196.8L1069.2 153.9L1070.0 129.4L1070.8 122.4L1072.3 126.9L1073.6 156.4L1074.9 131.1L1077.0 148.9L1077.8 174.0L1078.5 197.6L1079.0 212.4L1081.0 212.4L1081.5 179.5L1082.2 160.0L1083.0 131.5L1083.8 126.2L1085.3 159.7L1086.1 129.9L1087.4 126.0L1088.7 125.1L1089.6 124.9L1091.5 123.5L1092.7 146.3L1093.5 184.6L1094.2 207.7L1094.7 212.4L1096.5 212.4L1097.0 194.4L1097.7 153.9L1098.5 129.0L1099.3 125.2L1100.6 123.9L1102.2 126.0L1103.9 123.5L1105.7 126.2L1107.0 139.1L1107.8 174.3L1108.5 203.5L1109.0 212.4L1111.0 212.4L1111.5 185.8L1112.2 142.1L1113.0 124.9L1113.8 121.4L1115.7 121.3L1116.7 121.2L1118.5 122.1L1120.1 122.1L1121.5 139.1L1122.3 181.9L1123.0 203.5L1123.5 212.4L1125.0 212.4L1125.5 183.5L1126.2 144.6L1127.0 124.8L1127.8 121.4L1129.2 121.2L1130.4 121.8L1132.2 121.5L1133.3 120.0L1134.8 117.3L1135.7 135.4L1136.5 184.1L1137.2 201.1L1137.7 212.4L1140.0 212.4L1140.5 176.5L1141.2 135.6L1142.0 119.6L1142.8 118.1L1143.9 117.4L1144.9 160.3L1146.0 117.0L1147.7 115.9L1149.2 120.8L1150.7 139.7L1151.5 172.8L1152.2 202.9L1152.7 212.4L1155.0 212.4L1155.5 177.7L1156.2 154.1L1157.0 118.4L1157.8 115.3L1159.8 113.9L1160.9 115.6L1162.7 117.2L1163.6 114.9L1165.8 133.2L1166.6 165.8L1167.3 193.3L1167.8 212.4L1169.5 212.4L1170.0 186.4L1170.7 139.7L1171.5 117.6L1172.3 145.7L1173.8 112.0L1175.3 111.6L1177.2 112.4L1178.5 130.5L1179.3 168.5L1180.0 193.0L1180.5 212.4L1184.0 212.4L1184.5 194.4L1185.2 135.3L1186.0 112.7L1186.8 106.7L1188.2 108.7L1189.8 107.7L1191.0 109.4L1192.9 107.2L1195.0 132.0L1195.8 180.1L1196.5 203.5L1197.0 212.4L1200.0 212.4L1200.5 186.2L1201.2 98.5L1202.0 83.4L1202.8 78.3L1204.3 77.5L1205.6 79.0L1207.0 117.8L1207.8 156.1L1208.5 186.4L1209.0 212.4L1213.5 212.4L1214.0 166.4L1214.7 113.9L1215.5 89.5L1216.3 119.6L1217.3 82.2L1218.2 80.7L1219.2 83.0L1220.4 84.4L1221.8 85.7L1222.8 83.8L1224.0 117.3L1224.8 168.0L1225.5 196.6L1226.0 212.4L1228.5 212.4L1229.0 176.4L1229.7 138.4L1230.5 106.2L1231.3 97.6L1233.2 99.0L1234.1 99.3L1235.4 98.6L1236.6 97.4L1238.5 110.9L1239.3 173.3L1240.0 196.9L1240.5 212.4L1243.5 212.4L1244.0 166.3L1244.7 125.2L1245.5 100.7L1246.3 95.9L1247.5 97.1L1248.4 93.7L1250.0 123.9L1250.8 173.2L1251.5 191.9L1252.0 212.4L1257.5 212.4L1258.0 171.9L1258.7 134.2L1259.5 105.4L1260.3 94.3L1261.8 94.4L1263.1 97.5L1264.4 91.1L1266.3 95.2L1268.0 125.0L1268.8 160.8L1269.5 189.7L1270.0 212.4L1271.5 212.4L1272.0 183.3L1272.7 118.7L1273.5 95.5L1274.3 93.4L1275.3 90.5L1276.5 93.1L1278.3 92.2L1279.5 117.2L1280.3 166.7L1281.0 195.9L1281.5 212.4L1283.5 212.4L1286.0 212.4L1288.5 212.4L1291.0 212.4L1293.5 212.4L1296.0 212.4L1298.5 212.4L1301.0 212.4L1302.5 212.4L1303.0 176.0L1303.7 115.7L1304.5 96.6L1305.3 92.2L1306.7 91.5L1308.4 90.5L1309.8 91.6L1311.5 115.0L1312.3 167.2L1313.0 194.2L1313.5 212.4L1315.5 212.4L1316.0 169.3L1316.7 124.7L1317.5 93.5L1318.3 83.4L1319.8 83.7L1321.5 83.5L1323.1 82.8L1324.7 120.4L1325.5 167.1L1326.2 194.6L1326.7 212.4L1330.0 212.4L1330.5 172.5L1331.2 128.9L1332.0 91.0L1332.8 90.1L1333.7 78.4L1334.9 79.3L1336.1 104.1L1337.4 117.0L1339.0 103.2L1339.8 148.7L1340.5 194.7L1341.0 212.4L1342.5 209.7L1344.3 209.2L1346.1 208.9L1347.9 208.6L1349.7 208.6L1351.5 208.7L1353.3 209.0L1355.1 209.3L1356.9 209.3L1359.0 212.4L1359.8 174.2L1360.3 114.7L1362.5 120.8L1364.3 144.1L1365.4 133.0L1366.6 148.3L1369.4 151.3L1371.5 212.4" stroke="#00f000" stroke-width="1" fill="none"/><path d="M904.5 210.9h3v3h-3zM905.7 147.5h3v3h-3zM906.5 133.9h3v3h-3zM907.3 140.4h3v3h-3zM908.9 129.3h3v3h-3zM910.3 125.4h3v3h-3zM911.4 125.7h3v3h-3zM912.8 126.7h3v3h-3zM914.8 128.8h3v3h-3zM916.5 145.8h3v3h-3zM918.5 210.9h3v3h-3zM919.5 210.9h3v3h-3zM920.7 154.4h3v3h-3zM921.5 128.8h3v3h-3zM922.3 125.4h3v3h-3zM923.9 124.9h3v3h-3zM925.1 125.9h3v3h-3zM926.4 128.4h3v3h-3zM928.0 141.5h3v3h-3zM929.6 124.3h3v3h-3zM931.8 175.6h3v3h-3zM933.0 210.9h3v3h-3zM934.5 210.9h3v3h-3zM935.0 196.3h3v3h-3zM936.5 131.8h3v3h-3zM937.3 126.5h3v3h-3zM938.4 127.8h3v3h-3zM940.3 125.7h3v3h-3zM941.4 146.4h3v3h-3zM942.8 123.7h3v3h-3zM943.9 125.7h3v3h-3zM945.9 124.5h3v3h-3zM947.3 124.5h3v3h-3zM948.2 128.5h3v3h-3zM949.4 123.4h3v3h-3zM950.9 125.4h3v3h-3zM952.7 127.6h3v3h-3zM954.2 126.8h3v3h-3zM956.0 126.0h3v3h-3zM957.0 128.4h3v3h-3zM959.3 149.4h3v3h-3zM960.1 179.5h3v3h-3zM961.3 210.9h3v3h-3zM962.5 210.9h3v3h-3zM963.0 185.4h3v3h-3zM963.7 151.2h3v3h-3zM964.5 132.7h3v3h-3zM965.3 141.8h3v3h-3zM966.5 128.9h3v3h-3zM968.2 126.8h3v3h-3zM969.4 129.1h3v3h-3zM970.4 130.7h3v3h-3zM972.4 127.6h3v3h-3zM973.4 127.2h3v3h-3zM974.3 145.5h3v3h-3zM976.3 210.9h3v3h-3zM977.5 210.9h3v3h-3zM978.0 182.2h3v3h-3zM978.7 143.6h3v3h-3zM979.5 134.0h3v3h-3zM980.3 126.1h3v3h-3zM981.5 127.4h3v3h-3zM982.7 125.3h3v3h-3zM984.4 127.7h3v3h-3zM985.7 125.6h3v3h-3zM987.2 126.2h3v3h-3zM988.2 124.7h3v3h-3zM991.4 210.9h3v3h-3zM992.5 210.9h3v3h-3zM993.0 183.3h3v3h-3zM993.7 148.9h3v3h-3zM994.5 132.8h3v3h-3zM995.3 129.7h3v3h-3zM997.2 128.6h3v3h-3zM998.7 130.7h3v3h-3zM1000.2 130.4h3v3h-3zM1002.0 131.1h3v3h-3zM1003.5 139.6h3v3h-3zM1004.3 172.2h3v3h-3zM1005.5 210.9h3v3h-3zM1007.0 210.9h3v3h-3zM1009.0 134.9h3v3h-3zM1009.8 126.0h3v3h-3zM1011.3 126.1h3v3h-3zM1013.1 139.2h3v3h-3zM1014.3 173.0h3v3h-3zM1015.5 124.9h3v3h-3zM1016.7 126.5h3v3h-3zM1020.2 210.9h3v3h-3zM1021.5 210.9h3v3h-3zM1022.7 159.8h3v3h-3zM1023.5 134.3h3v3h-3zM1024.3 139.6h3v3h-3zM1025.3 128.2h3v3h-3zM1026.8 154.2h3v3h-3zM1028.3 127.4h3v3h-3zM1030.2 128.8h3v3h-3zM1031.9 125.8h3v3h-3zM1035.5 210.9h3v3h-3zM1037.0 210.9h3v3h-3zM1039.0 130.9h3v3h-3zM1039.8 125.5h3v3h-3zM1040.9 127.3h3v3h-3zM1042.2 125.7h3v3h-3zM1043.6 124.6h3v3h-3zM1045.0 125.5h3v3h-3zM1046.4 127.5h3v3h-3zM1047.8 145.1h3v3h-3zM1048.6 185.0h3v3h-3zM1049.8 210.9h3v3h-3zM1051.5 210.9h3v3h-3zM1053.5 129.2h3v3h-3zM1054.3 123.8h3v3h-3zM1055.6 164.6h3v3h-3zM1056.6 125.7h3v3h-3zM1058.3 126.9h3v3h-3zM1059.9 157.0h3v3h-3zM1061.2 120.6h3v3h-3zM1062.0 151.3h3v3h-3zM1062.8 175.3h3v3h-3zM1064.0 210.9h3v3h-3zM1066.5 210.9h3v3h-3zM1067.0 195.3h3v3h-3zM1067.7 152.4h3v3h-3zM1068.5 127.9h3v3h-3zM1069.3 120.9h3v3h-3zM1070.8 125.4h3v3h-3zM1072.1 154.9h3v3h-3zM1073.4 129.6h3v3h-3zM1077.5 210.9h3v3h-3zM1079.5 210.9h3v3h-3zM1080.0 178.0h3v3h-3zM1080.7 158.5h3v3h-3zM1081.5 130.0h3v3h-3zM1082.3 124.7h3v3h-3zM1083.8 158.2h3v3h-3zM1084.6 128.4h3v3h-3zM1085.9 124.5h3v3h-3zM1087.2 123.6h3v3h-3zM1088.1 123.4h3v3h-3zM1090.0 122.0h3v3h-3zM1091.2 144.8h3v3h-3zM1092.0 183.1h3v3h-3zM1093.2 210.9h3v3h-3zM1095.0 210.9h3v3h-3zM1096.2 152.4h3v3h-3zM1097.0 127.5h3v3h-3zM1097.8 123.7h3v3h-3zM1099.1 122.4h3v3h-3zM1100.7 124.5h3v3h-3zM1102.4 122.0h3v3h-3zM1104.2 124.7h3v3h-3zM1105.5 137.6h3v3h-3zM1106.3 172.8h3v3h-3zM1107.5 210.9h3v3h-3zM1109.5 210.9h3v3h-3zM1111.5 123.4h3v3h-3zM1112.3 119.9h3v3h-3zM1114.2 119.8h3v3h-3zM1115.2 119.7h3v3h-3zM1117.0 120.6h3v3h-3zM1118.6 120.6h3v3h-3zM1122.0 210.9h3v3h-3zM1123.5 210.9h3v3h-3zM1124.7 143.1h3v3h-3zM1125.5 123.3h3v3h-3zM1126.3 119.9h3v3h-3zM1127.7 119.7h3v3h-3zM1128.9 120.3h3v3h-3zM1130.7 120.0h3v3h-3zM1131.8 118.5h3v3h-3zM1133.3 115.8h3v3h-3zM1134.2 133.9h3v3h-3zM1136.2 210.9h3v3h-3zM1138.5 210.9h3v3h-3zM1139.0 175.0h3v3h-3zM1140.5 118.1h3v3h-3zM1141.3 116.6h3v3h-3zM1142.4 115.9h3v3h-3zM1143.4 158.8h3v3h-3zM1144.5 115.5h3v3h-3zM1146.2 114.4h3v3h-3zM1147.7 119.3h3v3h-3zM1149.2 138.2h3v3h-3zM1150.0 171.3h3v3h-3zM1151.2 210.9h3v3h-3zM1153.5 210.9h3v3h-3zM1154.0 176.2h3v3h-3zM1154.7 152.6h3v3h-3zM1155.5 116.9h3v3h-3zM1156.3 113.8h3v3h-3zM1158.3 112.4h3v3h-3zM1159.4 114.1h3v3h-3zM1161.2 115.7h3v3h-3zM1162.1 113.4h3v3h-3zM1165.1 164.3h3v3h-3zM1166.3 210.9h3v3h-3zM1168.0 210.9h3v3h-3zM1168.5 184.9h3v3h-3zM1169.2 138.2h3v3h-3zM1170.0 116.1h3v3h-3zM1170.8 144.2h3v3h-3zM1172.3 110.5h3v3h-3zM1173.8 110.1h3v3h-3zM1175.7 110.9h3v3h-3zM1179.0 210.9h3v3h-3zM1182.5 210.9h3v3h-3zM1183.0 192.9h3v3h-3zM1184.5 111.2h3v3h-3zM1185.3 105.2h3v3h-3zM1186.7 107.2h3v3h-3zM1188.3 106.2h3v3h-3zM1189.5 107.9h3v3h-3zM1191.4 105.7h3v3h-3zM1195.5 210.9h3v3h-3zM1198.5 210.9h3v3h-3zM1200.5 81.9h3v3h-3zM1201.3 76.8h3v3h-3zM1202.8 76.0h3v3h-3zM1204.1 77.5h3v3h-3zM1205.5 116.3h3v3h-3zM1207.5 210.9h3v3h-3zM1212.0 210.9h3v3h-3zM1214.0 88.0h3v3h-3zM1214.8 118.1h3v3h-3zM1215.8 80.7h3v3h-3zM1216.7 79.2h3v3h-3zM1217.7 81.5h3v3h-3zM1218.9 82.9h3v3h-3zM1220.3 84.2h3v3h-3zM1221.3 82.3h3v3h-3zM1222.5 115.8h3v3h-3zM1223.3 166.5h3v3h-3zM1224.5 210.9h3v3h-3zM1227.0 210.9h3v3h-3zM1227.5 174.9h3v3h-3zM1228.2 136.9h3v3h-3zM1229.0 104.7h3v3h-3zM1229.8 96.1h3v3h-3zM1231.7 97.5h3v3h-3zM1232.6 97.8h3v3h-3zM1233.9 97.1h3v3h-3zM1235.1 95.9h3v3h-3zM1237.0 109.4h3v3h-3zM1239.0 210.9h3v3h-3zM1242.0 210.9h3v3h-3zM1244.0 99.2h3v3h-3zM1244.8 94.4h3v3h-3zM1246.0 95.6h3v3h-3zM1246.9 92.2h3v3h-3zM1248.5 122.4h3v3h-3zM1250.5 210.9h3v3h-3zM1256.0 210.9h3v3h-3zM1258.0 103.9h3v3h-3zM1258.8 92.8h3v3h-3zM1260.3 92.9h3v3h-3zM1261.6 96.0h3v3h-3zM1262.9 89.6h3v3h-3zM1264.8 93.7h3v3h-3zM1266.5 123.5h3v3h-3zM1267.3 159.3h3v3h-3zM1268.5 210.9h3v3h-3zM1270.0 210.9h3v3h-3zM1271.2 117.2h3v3h-3zM1272.0 94.0h3v3h-3zM1272.8 91.9h3v3h-3zM1273.8 89.0h3v3h-3zM1275.0 91.6h3v3h-3zM1276.8 90.7h3v3h-3zM1278.0 115.7h3v3h-3zM1280.0 210.9h3v3h-3zM1282.0 210.9h3v3h-3zM1284.5 210.9h3v3h-3zM1287.0 210.9h3v3h-3zM1289.5 210.9h3v3h-3zM1292.0 210.9h3v3h-3zM1294.5 210.9h3v3h-3zM1297.0 210.9h3v3h-3zM1299.5 210.9h3v3h-3zM1301.0 210.9h3v3h-3zM1301.5 174.5h3v3h-3zM1302.2 114.2h3v3h-3zM1303.0 95.1h3v3h-3zM1303.8 90.7h3v3h-3zM1305.2 90.0h3v3h-3zM1306.9 89.0h3v3h-3zM1308.3 90.1h3v3h-3zM1310.0 113.5h3v3h-3zM1310.8 165.7h3v3h-3zM1312.0 210.9h3v3h-3zM1314.0 210.9h3v3h-3zM1314.5 167.8h3v3h-3zM1316.0 92.0h3v3h-3zM1316.8 81.9h3v3h-3zM1318.3 82.2h3v3h-3zM1320.0 82.0h3v3h-3zM1321.6 81.3h3v3h-3zM1323.2 118.9h3v3h-3zM1325.2 210.9h3v3h-3zM1328.5 210.9h3v3h-3zM1329.7 127.4h3v3h-3zM1330.5 89.5h3v3h-3zM1331.3 88.6h3v3h-3zM1332.2 76.9h3v3h-3zM1333.4 77.8h3v3h-3zM1334.6 102.6h3v3h-3zM1335.9 115.5h3v3h-3zM1337.5 101.7h3v3h-3zM1338.3 147.2h3v3h-3zM1339.5 210.9h3v3h-3zM1341.0 208.2h3v3h-3zM1342.8 207.7h3v3h-3zM1344.6 207.4h3v3h-3zM1346.4 207.1h3v3h-3zM1348.2 207.1h3v3h-3zM1350.0 207.2h3v3h-3zM1351.8 207.5h3v3h-3zM1353.6 207.8h3v3h-3zM1355.4 207.8h3v3h-3zM1357.5 210.9h3v3h-3zM1358.3 172.7h3v3h-3zM1358.8 113.2h3v3h-3zM1361.0 119.3h3v3h-3zM1362.8 142.6h3v3h-3zM1363.9 131.5h3v3h-3zM1365.1 146.8h3v3h-3zM1367.9 149.8h3v3h-3zM1370.0 210.9h3v3h-3z" fill="#00ff00"/><path d="M1364.3 65.7V212.4" stroke="#ff1a1a" stroke-width="1.2" stroke-dasharray="3 3"/><path d="M1354.3 143.7h4M1360.3 143.7h8M1370.3 143.7h4" stroke="#ff1a1a" stroke-width="1"/><path d="M1361.3 143.7h6M1364.3 140.7v6" stroke="#ff1a1a" stroke-width="1.6"/><path d="M868.5 332.5H1419.6M868.5 378.5H1419.6M868.5 286.5H1419.6" stroke="#747474" stroke-width="1" stroke-dasharray="2 3"/><path d="M934.5 270.7V423.8M1019.5 270.7V423.8M1103.5 270.7V423.8M1188.5 270.7V423.8M1272.5 270.7V423.8M1356.5 270.7V423.8M892.5 270.7V423.8M976.5 270.7V423.8M1061.5 270.7V423.8M1145.5 270.7V423.8M1230.5 270.7V423.8M1314.5 270.7V423.8M1399.5 270.7V423.8" stroke="#747474" stroke-width="1" stroke-dasharray="2 3"/><path d="M868 271.5H1420M868 424.5H1420M868.5 271V424M1420.5 271V424" stroke="#c8c8c8" stroke-width="1" stroke-dasharray="1 1" fill="none"/><path d="M862 271.5H868" stroke="#fff" stroke-width="1" fill="none" /><path d="M862 332.5H868" stroke="#fff" stroke-width="1" fill="none" /><path d="M862 378.5H868" stroke="#fff" stroke-width="1" fill="none" /><path d="M862 424.5H868" stroke="#fff" stroke-width="1" fill="none" /><path d="M862 286.5H868" stroke="#fff" stroke-width="1" fill="none" /><path d="M934.5 425V431M1019.5 425V431M1103.5 425V431M1188.5 425V431M1272.5 425V431M1356.5 425V431M868.5 425V431M1420.5 425V431M892.5 425V429M976.5 425V429M1061.5 425V429M1145.5 425V429M1230.5 425V429M1314.5 425V429M1399.5 425V429" stroke="#fff" stroke-width="1" fill="none" /><path d="M868.5 423.8L906.0 423.8L906.5 407.4L907.2 373.8L908.0 352.1L908.8 348.3L909.8 346.6L910.7 345.7L911.9 347.9L913.3 345.0L914.4 345.5L916.4 390.1L918.0 356.2L918.8 397.2L919.5 412.3L920.0 423.8L921.0 423.8L921.5 396.9L922.2 374.3L923.0 353.4L923.8 346.5L925.4 345.1L926.4 345.9L928.1 346.3L929.6 344.9L930.8 344.2L932.5 361.7L933.3 388.8L934.0 418.9L934.5 423.8L936.0 423.8L936.5 394.8L937.2 368.7L938.0 350.4L938.8 347.8L940.7 348.8L942.1 346.8L944.0 344.6L945.7 348.2L946.8 345.5L948.0 345.3L949.9 347.6L951.5 348.8L953.4 346.8L954.4 348.7L956.3 347.7L958.1 347.5L959.4 347.0L960.8 368.6L961.6 386.6L962.3 411.6L962.8 423.8L964.0 423.8L964.5 397.4L965.2 368.3L966.0 350.7L966.8 345.2L967.9 345.9L968.9 356.8L969.8 348.2L971.2 347.4L972.6 344.7L973.6 349.2L974.7 346.9L975.8 366.0L976.6 393.6L977.3 418.8L977.8 423.8L979.0 423.8L979.5 406.5L980.2 369.0L981.0 351.5L981.8 345.8L983.0 345.9L984.0 344.5L984.9 347.1L986.2 370.4L987.6 346.9L989.3 345.5L990.9 360.9L991.7 398.6L992.4 417.1L992.9 423.8L994.0 423.8L994.5 393.4L995.2 368.7L996.0 351.4L996.8 344.9L997.8 363.8L999.0 347.4L1001.0 347.6L1002.1 346.9L1003.2 347.5L1005.0 363.6L1005.8 387.7L1006.5 419.7L1007.0 423.8L1008.5 423.8L1009.0 393.0L1009.7 360.0L1010.5 348.7L1011.3 346.3L1012.3 368.5L1013.4 347.6L1015.2 345.8L1017.0 346.5L1018.8 347.4L1019.7 366.2L1020.5 389.2L1021.2 415.0L1021.7 423.8L1023.0 423.8L1023.5 394.8L1024.2 377.6L1025.0 351.6L1025.8 361.5L1027.3 350.0L1028.8 388.8L1030.2 347.6L1031.9 344.7L1033.1 344.9L1035.0 355.9L1035.8 389.4L1036.5 410.4L1037.0 423.8L1038.5 423.8L1039.0 398.8L1039.7 361.5L1040.5 348.3L1041.3 347.0L1043.0 347.1L1044.7 341.5L1046.2 346.2L1047.8 344.1L1049.3 355.2L1050.1 391.1L1050.8 419.4L1051.3 423.8L1053.0 423.8L1053.5 400.9L1054.2 377.2L1055.0 347.9L1055.8 346.2L1057.1 345.3L1058.4 346.0L1060.0 343.7L1062.0 346.4L1063.5 363.1L1064.3 395.8L1065.0 415.9L1065.5 423.8L1068.0 423.8L1068.5 394.8L1069.2 360.3L1070.0 350.0L1070.8 344.6L1071.8 344.9L1073.3 344.5L1074.4 346.6L1075.7 346.9L1077.0 361.6L1077.8 396.3L1078.5 412.3L1079.0 423.8L1081.0 423.8L1081.5 403.4L1082.2 372.0L1083.0 346.1L1083.8 339.1L1084.8 341.1L1086.1 342.2L1087.1 339.7L1088.7 340.9L1090.4 340.4L1091.7 338.7L1092.7 351.8L1093.5 389.2L1094.2 418.2L1094.7 423.8L1096.5 423.8L1097.0 401.0L1097.7 357.7L1098.5 345.2L1099.3 339.2L1101.2 357.3L1102.1 340.5L1103.5 341.2L1104.7 338.0L1105.8 341.2L1107.0 363.4L1107.8 389.7L1108.5 407.3L1109.0 423.8L1111.0 423.8L1111.5 410.6L1112.2 366.9L1113.0 345.7L1113.8 336.5L1115.5 337.3L1116.5 338.7L1117.9 340.1L1118.8 337.6L1120.0 335.5L1121.5 361.6L1122.3 394.9L1123.0 419.2L1123.5 423.8L1125.0 423.8L1125.5 397.1L1126.2 354.5L1127.0 338.7L1127.8 334.7L1128.8 334.2L1130.1 333.5L1132.1 337.2L1134.0 337.7L1135.7 359.8L1136.5 385.0L1137.2 416.4L1137.7 423.8L1140.0 423.8L1140.5 399.2L1141.2 364.6L1142.0 335.1L1142.8 332.1L1144.2 332.4L1146.0 343.2L1147.5 334.1L1149.3 333.0L1150.7 357.0L1151.5 384.8L1152.2 417.0L1152.7 423.8L1155.0 423.8L1155.5 402.6L1156.2 349.5L1157.0 336.4L1157.8 332.9L1158.7 329.4L1160.6 332.9L1162.3 329.9L1163.4 331.7L1165.8 345.3L1166.6 396.1L1167.3 417.1L1167.8 423.8L1169.5 423.8L1170.0 402.2L1170.7 358.7L1171.5 336.3L1172.3 331.3L1173.4 328.1L1174.7 331.5L1176.1 328.8L1177.0 329.3L1178.5 355.0L1179.3 386.9L1180.0 405.5L1180.5 423.8L1184.0 423.8L1184.5 390.8L1185.2 342.4L1186.0 331.0L1186.8 321.5L1187.8 321.2L1189.1 323.9L1190.7 325.9L1192.4 324.7L1194.2 321.4L1195.0 338.6L1195.8 393.4L1196.5 407.4L1197.0 423.8L1200.0 423.8L1200.5 391.8L1201.2 344.9L1202.0 314.6L1202.8 310.5L1204.5 310.5L1205.4 312.4L1207.0 328.5L1207.8 372.1L1208.5 413.2L1209.0 423.8L1213.5 423.8L1214.0 388.3L1214.7 358.3L1215.5 319.5L1216.3 337.9L1217.2 317.0L1218.5 318.2L1219.9 318.5L1221.1 319.1L1222.2 316.9L1224.0 345.6L1224.8 376.6L1225.5 409.6L1226.0 423.8L1228.5 423.8L1229.0 395.7L1229.7 353.0L1230.5 331.5L1231.3 320.3L1233.1 320.6L1234.2 321.2L1235.6 320.8L1236.8 320.4L1238.5 349.2L1239.3 377.9L1240.0 410.9L1240.5 423.8L1243.5 423.8L1244.0 405.1L1244.7 337.7L1245.5 326.0L1246.3 319.0L1247.7 356.3L1249.1 319.1L1250.0 332.6L1250.8 382.2L1251.5 407.0L1252.0 423.8L1257.5 423.8L1258.0 394.0L1258.7 348.6L1259.5 321.9L1260.3 320.0L1261.5 321.3L1262.6 317.8L1263.5 319.6L1265.2 318.0L1266.4 316.0L1268.0 345.7L1268.8 374.0L1269.5 403.4L1270.0 423.8L1271.5 423.8L1272.0 384.1L1272.7 355.0L1273.5 329.1L1274.3 324.7L1276.2 327.3L1277.5 323.2L1279.5 347.0L1280.3 380.7L1281.0 412.8L1281.5 423.8L1283.5 423.8L1286.0 423.8L1288.5 423.8L1291.0 423.8L1293.5 423.8L1296.0 423.8L1298.5 423.8L1301.0 423.8L1302.5 423.8L1303.0 392.1L1303.7 351.3L1304.5 322.5L1305.3 314.7L1307.2 315.8L1309.2 315.8L1310.3 317.3L1311.5 343.6L1312.3 374.7L1313.0 406.2L1313.5 423.8L1315.5 423.8L1316.0 388.1L1316.7 338.8L1317.5 320.2L1318.3 313.5L1320.0 327.5L1321.3 352.1L1322.5 337.6L1324.7 343.5L1325.5 382.1L1326.2 417.6L1326.7 423.8L1330.0 423.8L1330.5 400.5L1331.2 341.0L1332.0 296.8L1332.8 284.6L1333.9 286.3L1335.8 288.5L1337.4 327.0L1339.0 308.1L1339.8 369.6L1340.5 402.1L1341.0 423.8L1342.5 421.1L1344.3 420.6L1346.1 420.3L1347.9 420.0L1349.7 420.0L1351.5 420.1L1353.3 420.4L1355.1 420.7L1356.9 420.7L1359.0 423.8L1360.2 377.9L1361.0 336.2L1362.5 329.3L1364.3 326.4L1366.5 323.5L1369.0 326.4L1370.5 375.1L1371.5 423.8" stroke="#00f000" stroke-width="1" fill="none"/><path d="M904.5 422.3h3v3h-3zM905.7 372.3h3v3h-3zM906.5 350.6h3v3h-3zM907.3 346.8h3v3h-3zM908.3 345.1h3v3h-3zM909.2 344.2h3v3h-3zM910.4 346.4h3v3h-3zM911.8 343.5h3v3h-3zM912.9 344.0h3v3h-3zM914.9 388.6h3v3h-3zM916.5 354.7h3v3h-3zM918.5 422.3h3v3h-3zM919.5 422.3h3v3h-3zM920.0 395.4h3v3h-3zM921.5 351.9h3v3h-3zM922.3 345.0h3v3h-3zM923.9 343.6h3v3h-3zM924.9 344.4h3v3h-3zM926.6 344.8h3v3h-3zM928.1 343.4h3v3h-3zM929.3 342.7h3v3h-3zM933.0 422.3h3v3h-3zM934.5 422.3h3v3h-3zM936.5 348.9h3v3h-3zM937.3 346.3h3v3h-3zM939.2 347.3h3v3h-3zM940.6 345.3h3v3h-3zM942.5 343.1h3v3h-3zM944.2 346.7h3v3h-3zM945.3 344.0h3v3h-3zM946.5 343.8h3v3h-3zM948.4 346.1h3v3h-3zM950.0 347.3h3v3h-3zM951.9 345.3h3v3h-3zM952.9 347.2h3v3h-3zM954.8 346.2h3v3h-3zM956.6 346.0h3v3h-3zM957.9 345.5h3v3h-3zM960.1 385.1h3v3h-3zM961.3 422.3h3v3h-3zM962.5 422.3h3v3h-3zM963.7 366.8h3v3h-3zM964.5 349.2h3v3h-3zM965.3 343.7h3v3h-3zM966.4 344.4h3v3h-3zM967.4 355.3h3v3h-3zM968.3 346.7h3v3h-3zM969.7 345.9h3v3h-3zM971.1 343.2h3v3h-3zM972.1 347.7h3v3h-3zM973.2 345.4h3v3h-3zM976.3 422.3h3v3h-3zM977.5 422.3h3v3h-3zM979.5 350.0h3v3h-3zM980.3 344.3h3v3h-3zM981.5 344.4h3v3h-3zM982.5 343.0h3v3h-3zM983.4 345.6h3v3h-3zM984.7 368.9h3v3h-3zM986.1 345.4h3v3h-3zM987.8 344.0h3v3h-3zM989.4 359.4h3v3h-3zM990.2 397.1h3v3h-3zM991.4 422.3h3v3h-3zM992.5 422.3h3v3h-3zM993.7 367.2h3v3h-3zM994.5 349.9h3v3h-3zM995.3 343.4h3v3h-3zM996.3 362.3h3v3h-3zM997.5 345.9h3v3h-3zM999.5 346.1h3v3h-3zM1000.6 345.4h3v3h-3zM1001.7 346.0h3v3h-3zM1005.5 422.3h3v3h-3zM1007.0 422.3h3v3h-3zM1009.0 347.2h3v3h-3zM1009.8 344.8h3v3h-3zM1010.8 367.0h3v3h-3zM1011.9 346.1h3v3h-3zM1013.7 344.3h3v3h-3zM1015.5 345.0h3v3h-3zM1017.3 345.9h3v3h-3zM1019.0 387.7h3v3h-3zM1020.2 422.3h3v3h-3zM1021.5 422.3h3v3h-3zM1022.0 393.3h3v3h-3zM1022.7 376.1h3v3h-3zM1023.5 350.1h3v3h-3zM1024.3 360.0h3v3h-3zM1025.8 348.5h3v3h-3zM1027.3 387.3h3v3h-3zM1028.7 346.1h3v3h-3zM1030.4 343.2h3v3h-3zM1031.6 343.4h3v3h-3zM1035.5 422.3h3v3h-3zM1037.0 422.3h3v3h-3zM1039.0 346.8h3v3h-3zM1039.8 345.5h3v3h-3zM1041.5 345.6h3v3h-3zM1043.2 340.0h3v3h-3zM1044.7 344.7h3v3h-3zM1046.3 342.6h3v3h-3zM1048.6 389.6h3v3h-3zM1049.8 422.3h3v3h-3zM1051.5 422.3h3v3h-3zM1052.7 375.7h3v3h-3zM1053.5 346.4h3v3h-3zM1054.3 344.7h3v3h-3zM1055.6 343.8h3v3h-3zM1056.9 344.5h3v3h-3zM1058.5 342.2h3v3h-3zM1060.5 344.9h3v3h-3zM1064.0 422.3h3v3h-3zM1066.5 422.3h3v3h-3zM1067.0 393.3h3v3h-3zM1068.5 348.5h3v3h-3zM1069.3 343.1h3v3h-3zM1070.3 343.4h3v3h-3zM1071.8 343.0h3v3h-3zM1072.9 345.1h3v3h-3zM1074.2 345.4h3v3h-3zM1077.5 422.3h3v3h-3zM1079.5 422.3h3v3h-3zM1080.7 370.5h3v3h-3zM1081.5 344.6h3v3h-3zM1082.3 337.6h3v3h-3zM1083.3 339.6h3v3h-3zM1084.6 340.7h3v3h-3zM1085.6 338.2h3v3h-3zM1087.2 339.4h3v3h-3zM1088.9 338.9h3v3h-3zM1090.2 337.2h3v3h-3zM1091.2 350.3h3v3h-3zM1092.0 387.7h3v3h-3zM1093.2 422.3h3v3h-3zM1095.0 422.3h3v3h-3zM1097.0 343.7h3v3h-3zM1097.8 337.7h3v3h-3zM1099.7 355.8h3v3h-3zM1100.6 339.0h3v3h-3zM1102.0 339.7h3v3h-3zM1103.2 336.5h3v3h-3zM1104.3 339.7h3v3h-3zM1107.5 422.3h3v3h-3zM1109.5 422.3h3v3h-3zM1111.5 344.2h3v3h-3zM1112.3 335.0h3v3h-3zM1114.0 335.8h3v3h-3zM1115.0 337.2h3v3h-3zM1116.4 338.6h3v3h-3zM1117.3 336.1h3v3h-3zM1118.5 334.0h3v3h-3zM1120.8 393.4h3v3h-3zM1122.0 422.3h3v3h-3zM1123.5 422.3h3v3h-3zM1124.0 395.6h3v3h-3zM1124.7 353.0h3v3h-3zM1125.5 337.2h3v3h-3zM1126.3 333.2h3v3h-3zM1127.3 332.7h3v3h-3zM1128.6 332.0h3v3h-3zM1130.6 335.7h3v3h-3zM1132.5 336.2h3v3h-3zM1134.2 358.3h3v3h-3zM1136.2 422.3h3v3h-3zM1138.5 422.3h3v3h-3zM1140.5 333.6h3v3h-3zM1141.3 330.6h3v3h-3zM1142.7 330.9h3v3h-3zM1144.5 341.7h3v3h-3zM1146.0 332.6h3v3h-3zM1147.8 331.5h3v3h-3zM1149.2 355.5h3v3h-3zM1151.2 422.3h3v3h-3zM1153.5 422.3h3v3h-3zM1154.0 401.1h3v3h-3zM1154.7 348.0h3v3h-3zM1155.5 334.9h3v3h-3zM1156.3 331.4h3v3h-3zM1157.2 327.9h3v3h-3zM1159.1 331.4h3v3h-3zM1160.8 328.4h3v3h-3zM1161.9 330.2h3v3h-3zM1165.1 394.6h3v3h-3zM1166.3 422.3h3v3h-3zM1168.0 422.3h3v3h-3zM1168.5 400.7h3v3h-3zM1169.2 357.2h3v3h-3zM1170.0 334.8h3v3h-3zM1170.8 329.8h3v3h-3zM1171.9 326.6h3v3h-3zM1173.2 330.0h3v3h-3zM1174.6 327.3h3v3h-3zM1175.5 327.8h3v3h-3zM1177.8 385.4h3v3h-3zM1179.0 422.3h3v3h-3zM1182.5 422.3h3v3h-3zM1183.0 389.3h3v3h-3zM1183.7 340.9h3v3h-3zM1184.5 329.5h3v3h-3zM1185.3 320.0h3v3h-3zM1186.3 319.7h3v3h-3zM1187.6 322.4h3v3h-3zM1189.2 324.4h3v3h-3zM1190.9 323.2h3v3h-3zM1192.7 319.9h3v3h-3zM1193.5 337.1h3v3h-3zM1195.5 422.3h3v3h-3zM1198.5 422.3h3v3h-3zM1199.0 390.3h3v3h-3zM1199.7 343.4h3v3h-3zM1200.5 313.1h3v3h-3zM1201.3 309.0h3v3h-3zM1203.0 309.0h3v3h-3zM1203.9 310.9h3v3h-3zM1205.5 327.0h3v3h-3zM1207.5 422.3h3v3h-3zM1212.0 422.3h3v3h-3zM1212.5 386.8h3v3h-3zM1213.2 356.8h3v3h-3zM1214.0 318.0h3v3h-3zM1214.8 336.4h3v3h-3zM1215.7 315.5h3v3h-3zM1217.0 316.7h3v3h-3zM1218.4 317.0h3v3h-3zM1219.6 317.6h3v3h-3zM1220.7 315.4h3v3h-3zM1222.5 344.1h3v3h-3zM1223.3 375.1h3v3h-3zM1224.5 422.3h3v3h-3zM1227.0 422.3h3v3h-3zM1228.2 351.5h3v3h-3zM1229.0 330.0h3v3h-3zM1229.8 318.8h3v3h-3zM1231.6 319.1h3v3h-3zM1232.7 319.7h3v3h-3zM1234.1 319.3h3v3h-3zM1235.3 318.9h3v3h-3zM1237.0 347.7h3v3h-3zM1239.0 422.3h3v3h-3zM1242.0 422.3h3v3h-3zM1242.5 403.6h3v3h-3zM1244.0 324.5h3v3h-3zM1244.8 317.5h3v3h-3zM1246.2 354.8h3v3h-3zM1247.6 317.6h3v3h-3zM1248.5 331.1h3v3h-3zM1250.5 422.3h3v3h-3zM1256.0 422.3h3v3h-3zM1257.2 347.1h3v3h-3zM1258.0 320.4h3v3h-3zM1258.8 318.5h3v3h-3zM1260.0 319.8h3v3h-3zM1261.1 316.3h3v3h-3zM1262.0 318.1h3v3h-3zM1263.7 316.5h3v3h-3zM1264.9 314.5h3v3h-3zM1268.5 422.3h3v3h-3zM1270.0 422.3h3v3h-3zM1270.5 382.6h3v3h-3zM1272.0 327.6h3v3h-3zM1272.8 323.2h3v3h-3zM1274.7 325.8h3v3h-3zM1276.0 321.7h3v3h-3zM1280.0 422.3h3v3h-3zM1282.0 422.3h3v3h-3zM1284.5 422.3h3v3h-3zM1287.0 422.3h3v3h-3zM1289.5 422.3h3v3h-3zM1292.0 422.3h3v3h-3zM1294.5 422.3h3v3h-3zM1297.0 422.3h3v3h-3zM1299.5 422.3h3v3h-3zM1301.0 422.3h3v3h-3zM1302.2 349.8h3v3h-3zM1303.0 321.0h3v3h-3zM1303.8 313.2h3v3h-3zM1305.7 314.3h3v3h-3zM1307.7 314.3h3v3h-3zM1308.8 315.8h3v3h-3zM1312.0 422.3h3v3h-3zM1314.0 422.3h3v3h-3zM1314.5 386.6h3v3h-3zM1315.2 337.3h3v3h-3zM1316.0 318.7h3v3h-3zM1316.8 312.0h3v3h-3zM1318.5 326.0h3v3h-3zM1319.8 350.6h3v3h-3zM1321.0 336.1h3v3h-3zM1323.2 342.0h3v3h-3zM1325.2 422.3h3v3h-3zM1328.5 422.3h3v3h-3zM1329.7 339.5h3v3h-3zM1330.5 295.3h3v3h-3zM1331.3 283.1h3v3h-3zM1332.4 284.8h3v3h-3zM1334.3 287.0h3v3h-3zM1335.9 325.5h3v3h-3zM1337.5 306.6h3v3h-3zM1338.3 368.1h3v3h-3zM1339.5 422.3h3v3h-3zM1341.0 419.6h3v3h-3zM1342.8 419.1h3v3h-3zM1344.6 418.8h3v3h-3zM1346.4 418.5h3v3h-3zM1348.2 418.5h3v3h-3zM1350.0 418.6h3v3h-3zM1351.8 418.9h3v3h-3zM1353.6 419.2h3v3h-3zM1355.4 419.2h3v3h-3zM1357.5 422.3h3v3h-3zM1358.7 376.4h3v3h-3zM1359.5 334.7h3v3h-3zM1361.0 327.8h3v3h-3zM1362.8 324.9h3v3h-3zM1365.0 322.0h3v3h-3zM1367.5 324.9h3v3h-3zM1369.0 373.6h3v3h-3zM1370.0 422.3h3v3h-3z" fill="#00ff00"/><path d="M1364.3 276.7V423.8" stroke="#ff1a1a" stroke-width="1.2" stroke-dasharray="3 3"/><path d="M1354.3 326.4h4M1360.3 326.4h8M1370.3 326.4h4" stroke="#ff1a1a" stroke-width="1"/><path d="M1361.3 326.4h6M1364.3 323.4v6" stroke="#ff1a1a" stroke-width="1.6"/><path d="M873.3 533.5H1419.6M873.3 581.5H1419.6" stroke="#747474" stroke-width="1" stroke-dasharray="2 3"/><path d="M938.5 482.8V634.5M1022.5 482.8V634.5M1106.5 482.8V634.5M1190.5 482.8V634.5M1274.5 482.8V634.5M1358.5 482.8V634.5" stroke="#747474" stroke-width="1" stroke-dasharray="2 3"/><path d="M873 483.5H1420M873 634.5H1420M873.5 483V634M1420.5 483V634" stroke="#c8c8c8" stroke-width="1" stroke-dasharray="1 1" fill="none"/><path d="M867 482.5H873" stroke="#fff" stroke-width="1" fill="none" /><path d="M867 533.5H873" stroke="#fff" stroke-width="1" fill="none" /><path d="M867 581.5H873" stroke="#fff" stroke-width="1" fill="none" /><path d="M867 632.5H873" stroke="#fff" stroke-width="1" fill="none" /><path d="M867 485.5H873M867 629.5H873" stroke="#fff" stroke-width="1" fill="none" /><path d="M938.5 635V641M1022.5 635V641M1106.5 635V641M1190.5 635V641M1274.5 635V641M1358.5 635V641M873.5 635V641M1420.5 635V641" stroke="#fff" stroke-width="1" fill="none" /><path d="M873.3 629.1L910.5 629.1L911.0 598.3L911.7 561.6L912.5 552.9L913.3 544.4L914.2 545.7L915.4 545.5L916.8 543.9L918.2 547.6L920.0 543.0L922.4 553.5L923.2 593.8L923.9 623.4L924.4 629.1L925.3 629.1L925.8 611.9L926.5 564.0L927.3 550.4L928.1 546.9L929.4 544.2L931.0 547.5L932.4 546.5L934.4 545.4L936.7 568.0L937.5 596.8L938.2 619.7L938.7 629.1L940.2 629.1L940.7 608.1L941.4 577.5L942.2 547.3L943.0 542.6L944.8 545.8L946.4 545.9L947.6 544.1L949.5 546.5L951.0 542.3L953.0 544.0L954.4 546.0L956.2 547.8L957.6 543.7L958.8 545.2L960.3 542.6L962.0 544.8L963.8 544.4L964.8 559.3L965.6 599.1L966.3 612.8L966.8 629.1L968.0 629.1L968.5 601.8L969.2 572.4L970.0 551.7L970.8 547.3L972.2 544.4L973.4 545.8L975.3 546.8L976.9 546.1L977.8 542.1L978.8 545.0L979.6 557.8L980.4 595.8L981.1 619.7L981.6 629.1L982.8 629.1L983.3 611.1L984.0 572.5L984.8 549.8L985.6 544.3L987.5 557.7L988.9 543.4L990.5 545.8L991.4 545.9L993.4 546.3L994.6 564.9L995.4 589.2L996.1 620.3L996.6 629.1L997.7 629.1L998.2 603.9L998.9 575.0L999.7 549.9L1000.5 544.1L1002.5 545.0L1003.4 545.5L1004.4 544.3L1006.1 544.1L1007.4 545.4L1008.6 561.1L1009.4 588.3L1010.1 621.6L1010.6 629.1L1012.1 629.1L1012.6 614.0L1013.3 561.8L1014.1 548.4L1014.9 546.6L1015.9 576.2L1017.1 546.9L1018.5 545.8L1019.9 542.3L1021.3 544.8L1023.2 561.4L1024.0 600.2L1024.7 612.3L1025.2 629.1L1026.5 629.1L1027.0 605.9L1027.7 574.4L1028.5 550.4L1029.3 542.7L1030.4 548.3L1032.3 546.6L1034.0 543.7L1034.9 544.0L1036.4 544.8L1038.3 568.7L1039.1 588.1L1039.8 619.7L1040.3 629.1L1041.8 629.1L1042.3 613.3L1043.0 564.6L1043.8 550.8L1044.6 544.9L1045.9 548.5L1047.8 545.7L1049.1 547.1L1050.5 549.0L1051.5 542.8L1052.5 564.2L1053.3 595.0L1054.0 623.2L1054.5 629.1L1056.2 629.1L1056.7 599.0L1057.4 566.2L1058.2 545.9L1059.0 540.5L1060.6 544.6L1062.1 544.6L1063.8 544.4L1065.0 577.3L1066.6 563.2L1067.4 595.5L1068.1 613.1L1068.6 629.1L1071.1 629.1L1071.6 607.4L1072.3 576.0L1073.1 548.0L1073.9 544.3L1075.7 546.4L1077.5 544.3L1080.0 568.3L1080.8 598.8L1081.5 613.9L1082.0 629.1L1083.9 629.1L1084.4 610.6L1085.1 549.3L1085.9 538.2L1086.7 532.3L1087.7 533.8L1088.7 577.4L1089.8 533.5L1090.9 553.3L1092.2 534.8L1093.8 535.0L1095.5 557.7L1096.3 595.3L1097.0 618.7L1097.5 629.1L1099.3 629.1L1099.8 608.7L1100.5 559.5L1101.3 534.5L1102.1 546.6L1103.2 564.2L1104.3 530.0L1106.0 533.0L1107.1 531.6L1108.3 532.2L1109.7 542.7L1110.5 598.4L1111.2 618.7L1111.7 629.1L1113.7 629.1L1114.2 609.8L1114.9 568.0L1115.7 535.8L1116.5 526.1L1117.9 530.2L1119.8 527.4L1120.7 530.3L1121.7 531.3L1124.1 557.5L1124.9 589.7L1125.6 617.9L1126.1 629.1L1127.6 629.1L1128.1 591.1L1128.8 567.6L1129.6 532.8L1130.4 559.1L1131.7 528.4L1133.0 528.9L1133.9 528.4L1135.8 527.4L1137.1 564.8L1138.2 543.3L1139.0 593.9L1139.7 618.3L1140.2 629.1L1142.4 629.1L1142.9 608.4L1143.6 565.8L1144.4 532.3L1145.2 526.1L1146.8 524.6L1148.4 525.9L1149.9 526.9L1151.8 527.7L1153.0 539.9L1153.8 597.8L1154.5 619.8L1155.0 629.1L1157.3 629.1L1157.8 609.8L1158.5 556.8L1159.3 532.6L1160.1 527.4L1161.1 526.5L1162.6 528.3L1164.3 525.5L1165.9 525.5L1167.1 526.3L1168.0 548.0L1168.8 589.7L1169.5 610.1L1170.0 629.1L1171.7 629.1L1172.2 609.9L1172.9 567.2L1173.7 535.9L1174.5 526.3L1175.5 527.3L1177.4 528.7L1179.0 526.7L1180.6 553.0L1181.4 593.0L1182.1 614.4L1182.6 629.1L1186.1 629.1L1186.6 609.2L1187.3 544.6L1188.1 523.2L1188.9 520.3L1189.8 516.7L1191.6 518.4L1193.5 521.1L1195.2 520.6L1196.9 537.9L1197.7 589.4L1198.4 617.7L1198.9 629.1L1201.9 629.1L1202.4 585.7L1203.1 554.4L1203.9 509.7L1204.7 506.3L1206.3 506.6L1207.9 506.0L1208.8 522.8L1209.6 570.9L1210.3 616.9L1210.8 629.1L1215.3 629.1L1215.8 607.0L1216.5 552.8L1217.3 521.6L1218.1 511.4L1219.8 510.9L1221.4 512.1L1222.3 512.9L1223.3 512.7L1225.7 543.8L1226.5 593.0L1227.2 609.5L1227.7 629.1L1230.2 629.1L1230.7 605.5L1231.4 541.7L1232.2 528.1L1233.0 518.3L1233.9 515.0L1235.4 516.8L1236.9 517.9L1238.7 517.7L1240.1 540.4L1240.9 574.6L1241.6 623.5L1242.1 629.1L1245.0 629.1L1245.5 607.4L1246.2 548.9L1247.0 520.3L1247.8 514.5L1248.9 515.6L1250.5 515.9L1251.5 533.0L1252.3 575.5L1253.0 616.6L1253.5 629.1L1258.9 629.1L1259.4 583.6L1260.1 540.0L1260.9 520.1L1261.7 513.7L1262.9 513.3L1264.3 515.0L1265.3 513.6L1266.7 510.7L1267.9 512.7L1269.3 533.1L1270.1 583.5L1270.8 615.5L1271.3 629.1L1272.8 629.1L1273.3 611.0L1274.0 537.3L1274.8 528.0L1275.6 519.5L1277.2 519.3L1279.2 522.2L1280.7 545.3L1281.5 592.0L1282.2 618.0L1282.7 629.1L1284.7 629.1L1287.2 629.1L1289.7 629.1L1292.2 629.1L1294.7 629.1L1297.2 629.1L1299.7 629.1L1302.2 629.1L1303.5 629.1L1304.0 597.8L1304.7 537.9L1305.5 520.7L1306.3 511.4L1307.4 510.3L1309.1 513.3L1311.0 512.7L1312.4 531.5L1313.2 586.3L1313.9 610.8L1314.4 629.1L1316.4 629.1L1316.9 600.7L1317.6 554.6L1318.4 509.8L1319.2 540.5L1320.2 532.4L1321.3 506.0L1322.7 506.1L1324.3 508.4L1325.5 534.3L1326.3 569.6L1327.0 615.1L1327.5 629.1L1330.8 629.1L1331.3 586.0L1332.0 551.8L1332.8 510.6L1333.6 535.8L1334.7 501.0L1336.5 501.9L1338.2 502.3L1339.7 539.2L1340.5 589.7L1341.2 613.1L1341.7 629.1L1343.2 626.1L1345.0 625.2L1346.8 624.5L1348.6 624.1L1350.4 624.0L1352.2 624.2L1354.0 624.7L1355.8 625.4L1357.6 625.4L1359.5 629.1L1360.7 585.2L1361.5 548.9L1363.0 542.7L1364.8 540.0L1367.0 537.3L1369.4 540.0L1370.9 584.6L1371.9 629.1" stroke="#00f000" stroke-width="1" fill="none"/><path d="M909.0 627.6h3v3h-3zM910.2 560.1h3v3h-3zM911.0 551.4h3v3h-3zM911.8 542.9h3v3h-3zM912.7 544.2h3v3h-3zM913.9 544.0h3v3h-3zM915.3 542.4h3v3h-3zM916.7 546.1h3v3h-3zM918.5 541.5h3v3h-3zM920.9 552.0h3v3h-3zM922.9 627.6h3v3h-3zM923.8 627.6h3v3h-3zM925.0 562.5h3v3h-3zM925.8 548.9h3v3h-3zM926.6 545.4h3v3h-3zM927.9 542.7h3v3h-3zM929.5 546.0h3v3h-3zM930.9 545.0h3v3h-3zM932.9 543.9h3v3h-3zM935.2 566.5h3v3h-3zM936.0 595.3h3v3h-3zM937.2 627.6h3v3h-3zM938.7 627.6h3v3h-3zM940.7 545.8h3v3h-3zM941.5 541.1h3v3h-3zM943.3 544.3h3v3h-3zM944.9 544.4h3v3h-3zM946.1 542.6h3v3h-3zM948.0 545.0h3v3h-3zM949.5 540.8h3v3h-3zM951.5 542.5h3v3h-3zM952.9 544.5h3v3h-3zM954.7 546.3h3v3h-3zM956.1 542.2h3v3h-3zM957.3 543.7h3v3h-3zM958.8 541.1h3v3h-3zM960.5 543.3h3v3h-3zM962.3 542.9h3v3h-3zM963.3 557.8h3v3h-3zM965.3 627.6h3v3h-3zM966.5 627.6h3v3h-3zM967.7 570.9h3v3h-3zM968.5 550.2h3v3h-3zM969.3 545.8h3v3h-3zM970.7 542.9h3v3h-3zM971.9 544.3h3v3h-3zM973.8 545.3h3v3h-3zM975.4 544.6h3v3h-3zM976.3 540.6h3v3h-3zM977.3 543.5h3v3h-3zM978.1 556.3h3v3h-3zM978.9 594.3h3v3h-3zM980.1 627.6h3v3h-3zM981.3 627.6h3v3h-3zM981.8 609.6h3v3h-3zM983.3 548.3h3v3h-3zM984.1 542.8h3v3h-3zM986.0 556.2h3v3h-3zM987.4 541.9h3v3h-3zM989.0 544.3h3v3h-3zM989.9 544.4h3v3h-3zM991.9 544.8h3v3h-3zM995.1 627.6h3v3h-3zM996.2 627.6h3v3h-3zM997.4 573.5h3v3h-3zM998.2 548.4h3v3h-3zM999.0 542.6h3v3h-3zM1001.0 543.5h3v3h-3zM1001.9 544.0h3v3h-3zM1002.9 542.8h3v3h-3zM1004.6 542.6h3v3h-3zM1005.9 543.9h3v3h-3zM1009.1 627.6h3v3h-3zM1010.6 627.6h3v3h-3zM1011.1 612.5h3v3h-3zM1011.8 560.3h3v3h-3zM1012.6 546.9h3v3h-3zM1013.4 545.1h3v3h-3zM1014.4 574.7h3v3h-3zM1015.6 545.4h3v3h-3zM1017.0 544.3h3v3h-3zM1018.4 540.8h3v3h-3zM1019.8 543.3h3v3h-3zM1021.7 559.9h3v3h-3zM1022.5 598.7h3v3h-3zM1023.7 627.6h3v3h-3zM1025.0 627.6h3v3h-3zM1026.2 572.9h3v3h-3zM1027.0 548.9h3v3h-3zM1027.8 541.2h3v3h-3zM1028.9 546.8h3v3h-3zM1030.8 545.1h3v3h-3zM1032.5 542.2h3v3h-3zM1033.4 542.5h3v3h-3zM1034.9 543.3h3v3h-3zM1036.8 567.2h3v3h-3zM1038.8 627.6h3v3h-3zM1040.3 627.6h3v3h-3zM1042.3 549.3h3v3h-3zM1043.1 543.4h3v3h-3zM1044.4 547.0h3v3h-3zM1046.3 544.2h3v3h-3zM1047.6 545.6h3v3h-3zM1049.0 547.5h3v3h-3zM1050.0 541.3h3v3h-3zM1051.0 562.7h3v3h-3zM1051.8 593.5h3v3h-3zM1053.0 627.6h3v3h-3zM1054.7 627.6h3v3h-3zM1055.9 564.7h3v3h-3zM1056.7 544.4h3v3h-3zM1057.5 539.0h3v3h-3zM1059.1 543.1h3v3h-3zM1060.6 543.1h3v3h-3zM1062.3 542.9h3v3h-3zM1063.5 575.8h3v3h-3zM1065.1 561.7h3v3h-3zM1065.9 594.0h3v3h-3zM1067.1 627.6h3v3h-3zM1069.6 627.6h3v3h-3zM1071.6 546.5h3v3h-3zM1072.4 542.8h3v3h-3zM1074.2 544.9h3v3h-3zM1076.0 542.8h3v3h-3zM1080.5 627.6h3v3h-3zM1082.4 627.6h3v3h-3zM1082.9 609.1h3v3h-3zM1084.4 536.7h3v3h-3zM1085.2 530.8h3v3h-3zM1086.2 532.3h3v3h-3zM1087.2 575.9h3v3h-3zM1088.3 532.0h3v3h-3zM1089.4 551.8h3v3h-3zM1090.7 533.3h3v3h-3zM1092.3 533.5h3v3h-3zM1094.0 556.2h3v3h-3zM1096.0 627.6h3v3h-3zM1097.8 627.6h3v3h-3zM1099.8 533.0h3v3h-3zM1100.6 545.1h3v3h-3zM1101.7 562.7h3v3h-3zM1102.8 528.5h3v3h-3zM1104.5 531.5h3v3h-3zM1105.6 530.1h3v3h-3zM1106.8 530.7h3v3h-3zM1110.2 627.6h3v3h-3zM1112.2 627.6h3v3h-3zM1112.7 608.3h3v3h-3zM1113.4 566.5h3v3h-3zM1114.2 534.3h3v3h-3zM1115.0 524.6h3v3h-3zM1116.4 528.7h3v3h-3zM1118.3 525.9h3v3h-3zM1119.2 528.8h3v3h-3zM1120.2 529.8h3v3h-3zM1124.6 627.6h3v3h-3zM1126.1 627.6h3v3h-3zM1128.1 531.3h3v3h-3zM1128.9 557.6h3v3h-3zM1130.2 526.9h3v3h-3zM1131.5 527.4h3v3h-3zM1132.4 526.9h3v3h-3zM1134.3 525.9h3v3h-3zM1135.6 563.3h3v3h-3zM1136.7 541.8h3v3h-3zM1138.7 627.6h3v3h-3zM1140.9 627.6h3v3h-3zM1142.9 530.8h3v3h-3zM1143.7 524.6h3v3h-3zM1145.3 523.1h3v3h-3zM1146.9 524.4h3v3h-3zM1148.4 525.4h3v3h-3zM1150.3 526.2h3v3h-3zM1151.5 538.4h3v3h-3zM1152.3 596.3h3v3h-3zM1153.5 627.6h3v3h-3zM1155.8 627.6h3v3h-3zM1156.3 608.3h3v3h-3zM1157.0 555.3h3v3h-3zM1157.8 531.1h3v3h-3zM1158.6 525.9h3v3h-3zM1159.6 525.0h3v3h-3zM1161.1 526.8h3v3h-3zM1162.8 524.0h3v3h-3zM1164.4 524.0h3v3h-3zM1165.6 524.8h3v3h-3zM1168.5 627.6h3v3h-3zM1170.2 627.6h3v3h-3zM1170.7 608.4h3v3h-3zM1171.4 565.7h3v3h-3zM1172.2 534.4h3v3h-3zM1173.0 524.8h3v3h-3zM1174.0 525.8h3v3h-3zM1175.9 527.2h3v3h-3zM1177.5 525.2h3v3h-3zM1179.1 551.5h3v3h-3zM1181.1 627.6h3v3h-3zM1184.6 627.6h3v3h-3zM1185.8 543.1h3v3h-3zM1186.6 521.7h3v3h-3zM1187.4 518.8h3v3h-3zM1188.3 515.2h3v3h-3zM1190.1 516.9h3v3h-3zM1192.0 519.6h3v3h-3zM1193.7 519.1h3v3h-3zM1195.4 536.4h3v3h-3zM1196.2 587.9h3v3h-3zM1197.4 627.6h3v3h-3zM1200.4 627.6h3v3h-3zM1201.6 552.9h3v3h-3zM1202.4 508.2h3v3h-3zM1203.2 504.8h3v3h-3zM1204.8 505.1h3v3h-3zM1206.4 504.5h3v3h-3zM1207.3 521.3h3v3h-3zM1209.3 627.6h3v3h-3zM1213.8 627.6h3v3h-3zM1215.0 551.3h3v3h-3zM1215.8 520.1h3v3h-3zM1216.6 509.9h3v3h-3zM1218.3 509.4h3v3h-3zM1219.9 510.6h3v3h-3zM1220.8 511.4h3v3h-3zM1221.8 511.2h3v3h-3zM1224.2 542.3h3v3h-3zM1226.2 627.6h3v3h-3zM1228.7 627.6h3v3h-3zM1229.9 540.2h3v3h-3zM1230.7 526.6h3v3h-3zM1231.5 516.8h3v3h-3zM1232.4 513.5h3v3h-3zM1233.9 515.3h3v3h-3zM1235.4 516.4h3v3h-3zM1237.2 516.2h3v3h-3zM1239.4 573.1h3v3h-3zM1240.6 627.6h3v3h-3zM1243.5 627.6h3v3h-3zM1244.0 605.9h3v3h-3zM1245.5 518.8h3v3h-3zM1246.3 513.0h3v3h-3zM1247.4 514.1h3v3h-3zM1249.0 514.4h3v3h-3zM1250.0 531.5h3v3h-3zM1250.8 574.0h3v3h-3zM1252.0 627.6h3v3h-3zM1257.4 627.6h3v3h-3zM1257.9 582.1h3v3h-3zM1259.4 518.6h3v3h-3zM1260.2 512.2h3v3h-3zM1261.4 511.8h3v3h-3zM1262.8 513.5h3v3h-3zM1263.8 512.1h3v3h-3zM1265.2 509.2h3v3h-3zM1266.4 511.2h3v3h-3zM1267.8 531.6h3v3h-3zM1269.8 627.6h3v3h-3zM1271.3 627.6h3v3h-3zM1273.3 526.5h3v3h-3zM1274.1 518.0h3v3h-3zM1275.7 517.8h3v3h-3zM1277.7 520.7h3v3h-3zM1279.2 543.8h3v3h-3zM1281.2 627.6h3v3h-3zM1283.2 627.6h3v3h-3zM1285.7 627.6h3v3h-3zM1288.2 627.6h3v3h-3zM1290.7 627.6h3v3h-3zM1293.2 627.6h3v3h-3zM1295.7 627.6h3v3h-3zM1298.2 627.6h3v3h-3zM1300.7 627.6h3v3h-3zM1302.0 627.6h3v3h-3zM1302.5 596.3h3v3h-3zM1303.2 536.4h3v3h-3zM1304.0 519.2h3v3h-3zM1304.8 509.9h3v3h-3zM1305.9 508.8h3v3h-3zM1307.6 511.8h3v3h-3zM1309.5 511.2h3v3h-3zM1310.9 530.0h3v3h-3zM1311.7 584.8h3v3h-3zM1312.9 627.6h3v3h-3zM1314.9 627.6h3v3h-3zM1316.1 553.1h3v3h-3zM1316.9 508.3h3v3h-3zM1317.7 539.0h3v3h-3zM1318.7 530.9h3v3h-3zM1319.8 504.5h3v3h-3zM1321.2 504.6h3v3h-3zM1322.8 506.9h3v3h-3zM1326.0 627.6h3v3h-3zM1329.3 627.6h3v3h-3zM1329.8 584.5h3v3h-3zM1331.3 509.1h3v3h-3zM1332.1 534.3h3v3h-3zM1333.2 499.5h3v3h-3zM1335.0 500.4h3v3h-3zM1336.7 500.8h3v3h-3zM1339.0 588.2h3v3h-3zM1340.2 627.6h3v3h-3zM1341.7 624.6h3v3h-3zM1343.5 623.7h3v3h-3zM1345.3 623.0h3v3h-3zM1347.1 622.6h3v3h-3zM1348.9 622.5h3v3h-3zM1350.7 622.7h3v3h-3zM1352.5 623.2h3v3h-3zM1354.3 623.9h3v3h-3zM1356.1 623.9h3v3h-3zM1358.0 627.6h3v3h-3zM1359.2 583.7h3v3h-3zM1360.0 547.4h3v3h-3zM1361.5 541.2h3v3h-3zM1363.3 538.5h3v3h-3zM1365.5 535.8h3v3h-3zM1367.9 538.5h3v3h-3zM1369.4 583.1h3v3h-3zM1370.4 627.6h3v3h-3z" fill="#00ff00"/><path d="M1356.5 483.8V629.1M1358.5 483.8V629.1" stroke="#00f000" stroke-width="1"/><path d="M1364.3 488.8V634.5" stroke="#ff1a1a" stroke-width="1.2" stroke-dasharray="3 3"/><path d="M1354.3 540.0h4M1360.3 540.0h8M1370.3 540.0h4" stroke="#ff1a1a" stroke-width="1"/><path d="M1361.3 540.0h6M1364.3 537.0v6" stroke="#ff1a1a" stroke-width="1.6"/><path d="M868.5 726.5H1419.6M868.5 786.5H1419.6" stroke="#747474" stroke-width="1" stroke-dasharray="2 3"/><path d="M934.5 692.8V845.2M1019.5 692.8V845.2M1103.5 692.8V845.2M1188.5 692.8V845.2M1272.5 692.8V845.2M1356.5 692.8V845.2M892.5 692.8V845.2M976.5 692.8V845.2M1061.5 692.8V845.2M1145.5 692.8V845.2M1230.5 692.8V845.2M1314.5 692.8V845.2M1399.5 692.8V845.2" stroke="#747474" stroke-width="1" stroke-dasharray="2 3"/><path d="M868 693.5H1420M868 845.5H1420M868.5 693V845M1420.5 693V845" stroke="#c8c8c8" stroke-width="1" stroke-dasharray="1 1" fill="none"/><path d="M862 693.5H868" stroke="#fff" stroke-width="1" fill="none" /><path d="M862 726.5H868" stroke="#fff" stroke-width="1" fill="none" /><path d="M862 786.5H868" stroke="#fff" stroke-width="1" fill="none" /><path d="M862 845.5H868" stroke="#fff" stroke-width="1" fill="none" /><path d="M934.5 846V852M1019.5 846V852M1103.5 846V852M1188.5 846V852M1272.5 846V852M1356.5 846V852M868.5 846V852M1420.5 846V852M892.5 846V850M976.5 846V850M1061.5 846V850M1145.5 846V850M1230.5 846V850M1314.5 846V850M1399.5 846V850" stroke="#fff" stroke-width="1" fill="none" /><path d="M868.5 845.2L906.0 845.2L906.5 812.1L907.2 773.4L908.0 757.2L908.8 750.8L910.5 751.1L912.2 754.0L913.9 752.9L915.1 752.2L916.3 750.1L918.0 772.6L918.8 816.9L919.5 828.5L920.0 845.2L921.0 845.2L921.5 827.9L922.2 769.2L923.0 755.8L923.8 753.9L925.1 753.8L926.9 751.3L928.0 752.5L929.6 754.6L931.3 752.7L932.5 773.3L933.3 813.6L934.0 829.9L934.5 845.2L936.0 845.2L936.5 812.8L937.2 767.4L938.0 758.1L938.8 754.1L940.7 752.6L941.8 753.1L942.9 750.2L943.8 752.6L945.4 750.9L947.0 769.8L948.0 755.3L949.7 754.2L951.1 774.3L952.6 754.4L953.6 752.3L954.6 767.0L955.6 751.4L957.2 750.0L958.5 754.5L960.8 778.3L961.6 808.1L962.3 831.0L962.8 845.2L964.0 845.2L964.5 809.8L965.2 774.8L966.0 759.6L966.8 752.1L968.1 754.4L969.0 752.2L970.0 781.9L971.1 754.0L972.3 753.6L973.9 768.4L975.8 774.5L976.6 801.9L977.3 836.0L977.8 845.2L979.0 845.2L979.5 817.2L980.2 785.2L981.0 760.4L981.8 752.4L983.1 754.9L984.0 755.5L985.8 753.6L987.5 790.6L988.9 750.6L990.9 776.4L991.7 805.9L992.4 828.5L992.9 845.2L994.0 845.2L994.5 814.1L995.2 772.4L996.0 757.6L996.8 753.4L997.8 753.7L998.8 756.1L1000.6 754.2L1001.8 798.9L1003.3 754.8L1005.0 766.8L1005.8 801.7L1006.5 839.3L1007.0 845.2L1008.5 845.2L1009.0 830.9L1009.7 770.4L1010.5 755.5L1011.3 752.3L1012.6 751.5L1014.1 794.7L1015.4 751.8L1017.0 751.4L1018.1 770.6L1019.7 766.4L1020.5 812.6L1021.2 829.1L1021.7 845.2L1023.0 845.2L1023.5 828.9L1024.2 773.0L1025.0 757.4L1025.8 755.4L1027.2 753.3L1028.5 755.3L1030.4 751.8L1032.0 754.1L1032.9 763.5L1035.0 771.0L1035.8 807.4L1036.5 837.2L1037.0 845.2L1038.5 845.2L1039.0 820.6L1039.7 773.3L1040.5 760.1L1041.3 752.4L1042.4 753.1L1043.6 752.2L1044.7 753.4L1045.7 752.9L1047.4 788.2L1049.3 767.8L1050.1 805.4L1050.8 827.7L1051.3 845.2L1053.0 845.2L1053.5 814.8L1054.2 771.0L1055.0 758.5L1055.8 752.1L1057.7 753.2L1059.2 753.1L1060.3 753.2L1061.4 755.4L1062.4 754.2L1063.5 768.8L1064.3 810.5L1065.0 832.0L1065.5 845.2L1068.0 845.2L1068.5 824.0L1069.2 774.6L1070.0 760.7L1070.8 754.0L1071.8 754.3L1073.4 754.0L1074.5 768.3L1075.4 753.9L1077.0 774.7L1077.8 813.0L1078.5 829.3L1079.0 845.2L1081.0 845.2L1081.5 817.2L1082.2 773.6L1083.0 742.3L1083.8 737.2L1085.0 739.8L1086.2 740.7L1087.7 739.7L1088.6 739.2L1089.5 738.0L1091.3 738.7L1092.7 755.0L1093.5 806.0L1094.2 828.2L1094.7 845.2L1096.5 845.2L1097.0 818.4L1097.7 764.8L1098.5 745.7L1099.3 738.2L1101.1 737.7L1102.4 740.1L1104.0 740.9L1105.7 739.1L1107.0 765.9L1107.8 812.9L1108.5 829.9L1109.0 845.2L1111.0 845.2L1111.5 818.0L1112.2 764.2L1113.0 745.3L1113.8 737.1L1115.0 737.0L1116.6 734.5L1118.3 735.0L1119.8 737.8L1121.5 747.7L1122.3 799.8L1123.0 836.5L1123.5 845.2L1125.0 845.2L1125.5 811.9L1126.2 758.5L1127.0 740.4L1127.8 733.5L1129.6 734.5L1131.0 734.3L1132.9 735.2L1134.8 735.9L1135.7 765.5L1136.5 797.7L1137.2 824.0L1137.7 845.2L1140.0 845.2L1140.5 824.5L1141.2 776.6L1142.0 740.4L1142.8 738.3L1143.7 739.8L1144.8 737.5L1146.0 763.6L1147.1 737.8L1148.9 778.8L1150.7 761.6L1151.5 807.3L1152.2 825.1L1152.7 845.2L1155.0 845.2L1155.5 805.9L1156.2 761.0L1157.0 746.4L1157.8 738.6L1158.7 738.7L1160.4 740.3L1161.6 739.4L1163.3 737.8L1164.5 741.8L1165.8 755.9L1166.6 797.9L1167.3 829.3L1167.8 845.2L1169.5 845.2L1170.0 803.9L1170.7 759.5L1171.5 744.1L1172.3 754.1L1173.7 734.3L1175.4 734.1L1177.3 732.9L1178.5 749.1L1179.3 793.9L1180.0 838.5L1180.5 845.2L1184.0 845.2L1184.5 823.0L1185.2 757.7L1186.0 738.7L1186.8 730.6L1188.1 731.2L1190.0 753.6L1191.4 728.1L1192.5 730.8L1193.7 731.9L1195.0 764.1L1195.8 801.4L1196.5 823.0L1197.0 845.2L1200.0 845.2L1200.5 816.6L1201.2 763.7L1202.0 725.5L1202.8 717.2L1204.2 739.2L1205.1 716.6L1206.2 718.0L1207.0 735.9L1207.8 797.3L1208.5 835.1L1209.0 845.2L1213.5 845.2L1214.0 810.7L1214.7 746.0L1215.5 736.4L1216.3 725.6L1217.5 727.2L1218.5 726.5L1219.7 727.3L1220.9 727.6L1222.1 727.8L1224.0 759.4L1224.8 807.4L1225.5 826.1L1226.0 845.2L1228.5 845.2L1229.0 799.4L1229.7 769.2L1230.5 735.3L1231.3 724.7L1232.9 728.8L1234.7 726.6L1236.4 724.1L1238.5 743.4L1239.3 803.4L1240.0 830.3L1240.5 845.2L1243.5 845.2L1244.0 818.2L1244.7 751.1L1245.5 729.0L1246.3 722.8L1248.2 722.6L1250.0 739.3L1250.8 792.4L1251.5 823.2L1252.0 845.2L1257.5 845.2L1258.0 798.6L1258.7 742.7L1259.5 724.3L1260.3 719.0L1262.0 721.7L1263.0 742.0L1264.5 721.2L1265.8 720.7L1268.0 751.0L1268.8 791.6L1269.5 830.5L1270.0 845.2L1271.5 845.2L1272.0 813.6L1272.7 743.1L1273.5 734.6L1274.3 724.3L1275.3 723.6L1277.1 723.1L1279.5 747.9L1280.3 798.6L1281.0 825.4L1281.5 845.2L1283.5 845.2L1286.0 845.2L1288.5 845.2L1291.0 845.2L1293.5 845.2L1296.0 845.2L1298.5 845.2L1301.0 845.2L1302.5 845.2L1303.0 796.0L1303.7 740.8L1304.5 723.6L1305.3 718.4L1306.2 716.4L1307.2 730.0L1308.6 717.8L1309.8 718.7L1311.5 752.6L1312.3 784.9L1313.0 832.7L1313.5 845.2L1315.5 845.2L1316.0 798.8L1316.7 744.9L1317.5 723.9L1318.3 716.7L1320.1 714.0L1321.8 737.5L1323.4 716.3L1324.7 731.0L1325.5 786.4L1326.2 833.6L1326.7 845.2L1330.0 845.2L1330.5 812.2L1331.2 731.3L1332.0 710.9L1332.8 708.2L1333.7 706.6L1334.8 719.4L1336.1 706.5L1337.0 709.1L1339.0 732.2L1339.8 780.5L1340.5 836.2L1341.0 845.2L1342.5 842.5L1344.3 842.0L1346.1 841.7L1347.9 841.4L1349.7 841.4L1351.5 841.5L1353.3 841.8L1355.1 842.2L1356.9 842.2L1359.0 845.2L1360.2 799.5L1361.0 789.0L1362.5 784.6L1364.3 782.7L1366.5 780.8L1369.0 782.7L1370.5 814.0L1371.5 845.2" stroke="#00f000" stroke-width="1" fill="none"/><path d="M904.5 843.7h3v3h-3zM905.0 810.6h3v3h-3zM906.5 755.7h3v3h-3zM907.3 749.3h3v3h-3zM909.0 749.6h3v3h-3zM910.7 752.5h3v3h-3zM912.4 751.4h3v3h-3zM913.6 750.7h3v3h-3zM914.8 748.6h3v3h-3zM917.3 815.4h3v3h-3zM918.5 843.7h3v3h-3zM919.5 843.7h3v3h-3zM920.0 826.4h3v3h-3zM921.5 754.3h3v3h-3zM922.3 752.4h3v3h-3zM923.6 752.3h3v3h-3zM925.4 749.8h3v3h-3zM926.5 751.0h3v3h-3zM928.1 753.1h3v3h-3zM929.8 751.2h3v3h-3zM931.0 771.8h3v3h-3zM931.8 812.1h3v3h-3zM933.0 843.7h3v3h-3zM934.5 843.7h3v3h-3zM935.0 811.3h3v3h-3zM935.7 765.9h3v3h-3zM936.5 756.6h3v3h-3zM937.3 752.6h3v3h-3zM939.2 751.1h3v3h-3zM940.3 751.6h3v3h-3zM941.4 748.7h3v3h-3zM942.3 751.1h3v3h-3zM943.9 749.4h3v3h-3zM945.5 768.3h3v3h-3zM946.5 753.8h3v3h-3zM948.2 752.7h3v3h-3zM949.6 772.8h3v3h-3zM951.1 752.9h3v3h-3zM952.1 750.8h3v3h-3zM953.1 765.5h3v3h-3zM954.1 749.9h3v3h-3zM955.7 748.5h3v3h-3zM957.0 753.0h3v3h-3zM960.1 806.6h3v3h-3zM961.3 843.7h3v3h-3zM962.5 843.7h3v3h-3zM963.0 808.3h3v3h-3zM964.5 758.1h3v3h-3zM965.3 750.6h3v3h-3zM966.6 752.9h3v3h-3zM967.5 750.7h3v3h-3zM968.5 780.4h3v3h-3zM969.6 752.5h3v3h-3zM970.8 752.1h3v3h-3zM972.4 766.9h3v3h-3zM974.3 773.0h3v3h-3zM976.3 843.7h3v3h-3zM977.5 843.7h3v3h-3zM978.7 783.7h3v3h-3zM979.5 758.9h3v3h-3zM980.3 750.9h3v3h-3zM981.6 753.4h3v3h-3zM982.5 754.0h3v3h-3zM984.3 752.1h3v3h-3zM986.0 789.1h3v3h-3zM987.4 749.1h3v3h-3zM989.4 774.9h3v3h-3zM990.2 804.4h3v3h-3zM991.4 843.7h3v3h-3zM992.5 843.7h3v3h-3zM994.5 756.1h3v3h-3zM995.3 751.9h3v3h-3zM996.3 752.2h3v3h-3zM997.3 754.6h3v3h-3zM999.1 752.7h3v3h-3zM1000.3 797.4h3v3h-3zM1001.8 753.3h3v3h-3zM1003.5 765.3h3v3h-3zM1005.5 843.7h3v3h-3zM1007.0 843.7h3v3h-3zM1009.0 754.0h3v3h-3zM1009.8 750.8h3v3h-3zM1011.1 750.0h3v3h-3zM1012.6 793.2h3v3h-3zM1013.9 750.3h3v3h-3zM1015.5 749.9h3v3h-3zM1016.6 769.1h3v3h-3zM1018.2 764.9h3v3h-3zM1020.2 843.7h3v3h-3zM1021.5 843.7h3v3h-3zM1022.0 827.4h3v3h-3zM1023.5 755.9h3v3h-3zM1024.3 753.9h3v3h-3zM1025.7 751.8h3v3h-3zM1027.0 753.8h3v3h-3zM1028.9 750.3h3v3h-3zM1030.5 752.6h3v3h-3zM1031.4 762.0h3v3h-3zM1033.5 769.5h3v3h-3zM1035.5 843.7h3v3h-3zM1037.0 843.7h3v3h-3zM1038.2 771.8h3v3h-3zM1039.0 758.6h3v3h-3zM1039.8 750.9h3v3h-3zM1040.9 751.6h3v3h-3zM1042.1 750.7h3v3h-3zM1043.2 751.9h3v3h-3zM1044.2 751.4h3v3h-3zM1045.9 786.7h3v3h-3zM1049.8 843.7h3v3h-3zM1051.5 843.7h3v3h-3zM1053.5 757.0h3v3h-3zM1054.3 750.6h3v3h-3zM1056.2 751.7h3v3h-3zM1057.7 751.6h3v3h-3zM1058.8 751.7h3v3h-3zM1059.9 753.9h3v3h-3zM1060.9 752.7h3v3h-3zM1064.0 843.7h3v3h-3zM1066.5 843.7h3v3h-3zM1068.5 759.2h3v3h-3zM1069.3 752.5h3v3h-3zM1070.3 752.8h3v3h-3zM1071.9 752.5h3v3h-3zM1073.0 766.8h3v3h-3zM1073.9 752.4h3v3h-3zM1075.5 773.2h3v3h-3zM1077.5 843.7h3v3h-3zM1079.5 843.7h3v3h-3zM1081.5 740.8h3v3h-3zM1082.3 735.7h3v3h-3zM1083.5 738.3h3v3h-3zM1084.7 739.2h3v3h-3zM1086.2 738.2h3v3h-3zM1087.1 737.7h3v3h-3zM1088.0 736.5h3v3h-3zM1089.8 737.2h3v3h-3zM1091.2 753.5h3v3h-3zM1092.0 804.5h3v3h-3zM1093.2 843.7h3v3h-3zM1095.0 843.7h3v3h-3zM1096.2 763.3h3v3h-3zM1097.0 744.2h3v3h-3zM1097.8 736.7h3v3h-3zM1099.6 736.2h3v3h-3zM1100.9 738.6h3v3h-3zM1102.5 739.4h3v3h-3zM1104.2 737.6h3v3h-3zM1105.5 764.4h3v3h-3zM1106.3 811.4h3v3h-3zM1107.5 843.7h3v3h-3zM1109.5 843.7h3v3h-3zM1110.7 762.7h3v3h-3zM1111.5 743.8h3v3h-3zM1112.3 735.6h3v3h-3zM1113.5 735.5h3v3h-3zM1115.1 733.0h3v3h-3zM1116.8 733.5h3v3h-3zM1118.3 736.3h3v3h-3zM1120.0 746.2h3v3h-3zM1120.8 798.3h3v3h-3zM1122.0 843.7h3v3h-3zM1123.5 843.7h3v3h-3zM1124.0 810.4h3v3h-3zM1124.7 757.0h3v3h-3zM1125.5 738.9h3v3h-3zM1126.3 732.0h3v3h-3zM1128.1 733.0h3v3h-3zM1129.5 732.8h3v3h-3zM1131.4 733.7h3v3h-3zM1133.3 734.4h3v3h-3zM1134.2 764.0h3v3h-3zM1136.2 843.7h3v3h-3zM1138.5 843.7h3v3h-3zM1139.7 775.1h3v3h-3zM1140.5 738.9h3v3h-3zM1141.3 736.8h3v3h-3zM1142.2 738.3h3v3h-3zM1143.3 736.0h3v3h-3zM1144.5 762.1h3v3h-3zM1145.6 736.3h3v3h-3zM1147.4 777.3h3v3h-3zM1150.0 805.8h3v3h-3zM1151.2 843.7h3v3h-3zM1153.5 843.7h3v3h-3zM1154.0 804.4h3v3h-3zM1154.7 759.5h3v3h-3zM1155.5 744.9h3v3h-3zM1156.3 737.1h3v3h-3zM1157.2 737.2h3v3h-3zM1158.9 738.8h3v3h-3zM1160.1 737.9h3v3h-3zM1161.8 736.3h3v3h-3zM1163.0 740.3h3v3h-3zM1164.3 754.4h3v3h-3zM1165.1 796.4h3v3h-3zM1166.3 843.7h3v3h-3zM1168.0 843.7h3v3h-3zM1169.2 758.0h3v3h-3zM1170.0 742.6h3v3h-3zM1170.8 752.6h3v3h-3zM1172.2 732.8h3v3h-3zM1173.9 732.6h3v3h-3zM1175.8 731.4h3v3h-3zM1177.0 747.6h3v3h-3zM1179.0 843.7h3v3h-3zM1182.5 843.7h3v3h-3zM1183.7 756.2h3v3h-3zM1184.5 737.2h3v3h-3zM1185.3 729.1h3v3h-3zM1186.6 729.7h3v3h-3zM1188.5 752.1h3v3h-3zM1189.9 726.6h3v3h-3zM1191.0 729.3h3v3h-3zM1192.2 730.4h3v3h-3zM1193.5 762.6h3v3h-3zM1194.3 799.9h3v3h-3zM1195.5 843.7h3v3h-3zM1198.5 843.7h3v3h-3zM1199.7 762.2h3v3h-3zM1200.5 724.0h3v3h-3zM1201.3 715.7h3v3h-3zM1202.7 737.7h3v3h-3zM1203.6 715.1h3v3h-3zM1204.7 716.5h3v3h-3zM1207.5 843.7h3v3h-3zM1212.0 843.7h3v3h-3zM1212.5 809.2h3v3h-3zM1213.2 744.5h3v3h-3zM1214.0 734.9h3v3h-3zM1214.8 724.1h3v3h-3zM1216.0 725.7h3v3h-3zM1217.0 725.0h3v3h-3zM1218.2 725.8h3v3h-3zM1219.4 726.1h3v3h-3zM1220.6 726.3h3v3h-3zM1223.3 805.9h3v3h-3zM1224.5 843.7h3v3h-3zM1227.0 843.7h3v3h-3zM1227.5 797.9h3v3h-3zM1229.0 733.8h3v3h-3zM1229.8 723.2h3v3h-3zM1231.4 727.3h3v3h-3zM1233.2 725.1h3v3h-3zM1234.9 722.6h3v3h-3zM1239.0 843.7h3v3h-3zM1242.0 843.7h3v3h-3zM1244.0 727.5h3v3h-3zM1244.8 721.3h3v3h-3zM1246.7 721.1h3v3h-3zM1250.5 843.7h3v3h-3zM1256.0 843.7h3v3h-3zM1256.5 797.1h3v3h-3zM1258.0 722.8h3v3h-3zM1258.8 717.5h3v3h-3zM1260.5 720.2h3v3h-3zM1261.5 740.5h3v3h-3zM1263.0 719.7h3v3h-3zM1264.3 719.2h3v3h-3zM1266.5 749.5h3v3h-3zM1268.5 843.7h3v3h-3zM1270.0 843.7h3v3h-3zM1272.0 733.1h3v3h-3zM1272.8 722.8h3v3h-3zM1273.8 722.1h3v3h-3zM1275.6 721.6h3v3h-3zM1278.0 746.4h3v3h-3zM1280.0 843.7h3v3h-3zM1282.0 843.7h3v3h-3zM1284.5 843.7h3v3h-3zM1287.0 843.7h3v3h-3zM1289.5 843.7h3v3h-3zM1292.0 843.7h3v3h-3zM1294.5 843.7h3v3h-3zM1297.0 843.7h3v3h-3zM1299.5 843.7h3v3h-3zM1301.0 843.7h3v3h-3zM1302.2 739.3h3v3h-3zM1303.0 722.1h3v3h-3zM1303.8 716.9h3v3h-3zM1304.7 714.9h3v3h-3zM1305.7 728.5h3v3h-3zM1307.1 716.3h3v3h-3zM1308.3 717.2h3v3h-3zM1310.8 783.4h3v3h-3zM1312.0 843.7h3v3h-3zM1314.0 843.7h3v3h-3zM1314.5 797.3h3v3h-3zM1316.0 722.4h3v3h-3zM1316.8 715.2h3v3h-3zM1318.6 712.5h3v3h-3zM1320.3 736.0h3v3h-3zM1321.9 714.8h3v3h-3zM1324.0 784.9h3v3h-3zM1325.2 843.7h3v3h-3zM1328.5 843.7h3v3h-3zM1329.7 729.8h3v3h-3zM1330.5 709.4h3v3h-3zM1331.3 706.7h3v3h-3zM1332.2 705.1h3v3h-3zM1333.3 717.9h3v3h-3zM1334.6 705.0h3v3h-3zM1335.5 707.6h3v3h-3zM1337.5 730.7h3v3h-3zM1339.5 843.7h3v3h-3zM1341.0 841.0h3v3h-3zM1342.8 840.5h3v3h-3zM1344.6 840.2h3v3h-3zM1346.4 839.9h3v3h-3zM1348.2 839.9h3v3h-3zM1350.0 840.0h3v3h-3zM1351.8 840.3h3v3h-3zM1353.6 840.7h3v3h-3zM1355.4 840.7h3v3h-3zM1357.5 843.7h3v3h-3zM1358.7 798.0h3v3h-3zM1359.5 787.5h3v3h-3zM1361.0 783.1h3v3h-3zM1362.8 781.2h3v3h-3zM1365.0 779.3h3v3h-3zM1367.5 781.2h3v3h-3zM1369.0 812.5h3v3h-3zM1370.0 843.7h3v3h-3z" fill="#00ff00"/><path d="M1364.3 698.8V845.2" stroke="#ff1a1a" stroke-width="1.2" stroke-dasharray="3 3"/><path d="M1354.3 782.7h4M1360.3 782.7h8M1370.3 782.7h4" stroke="#ff1a1a" stroke-width="1"/><path d="M1361.3 782.7h6M1364.3 779.7v6" stroke="#ff1a1a" stroke-width="1.6"/><path d="M1342.6 68.6L1370.0 115.5L1374.9 111.9L1374.0 131.4L1357.9 120.4L1363.7 118.7Z" fill="#ff2a1a" shape-rendering="auto"/><path d="M1336.5 277.3L1362.4 301.8L1366.3 297.1L1370.3 316.2L1352.0 309.6L1357.2 306.4Z" fill="#ff2a1a" shape-rendering="auto"/><path d="M1340.6 494.5L1367.0 517.4L1370.6 512.5L1375.4 531.4L1356.8 525.6L1361.9 522.2Z" fill="#ff2a1a" shape-rendering="auto"/><path d="M1335.5 695.2L1362.8 757.9L1368.1 754.8L1365.2 774.1L1350.3 761.5L1356.3 760.4Z" fill="#ff2a1a" shape-rendering="auto"/></svg>
<div class="t " style="left:35px;top:29px;color:#fff;font-size:13px;">101<i>机头</i>2#<i>驱动部</i>\<i>齿轮箱输入侧</i>3H\128k <i>加速度波形</i>(0.1-2000).<i>采样值</i></div>
<div class="t " style="left:439px;top:29px;color:#fff;font-size:13px;">2021/09/29 20:26:51</div>
<div class="t " style="left:579px;top:29px;color:#fff;font-size:13px;">2.664m/s^2</div>
<div class="t " style="left:667px;top:29px;color:#fff;font-size:13px;">0RPM</div>
<div style="position:absolute;left:717px;top:29px;width:52px;height:16px;overflow:hidden"><div class="t" style="left:0;top:0;color:#fff">0ms,3.962m/s^2</div></div>
<div class="t " style="right:1362px;top:102px;color:#fff;font-size:13px;">11.61</div>
<div class="t " style="right:1362px;top:158px;color:#fff;font-size:13px;">-9.307</div>
<div class="t " style="left:635px;top:123px;color:#fff;font-size:13px;">2.664m/s^2,0RPM</div>
<div class="t " style="left:635px;top:137.5px;color:#fff;font-size:13px;">2021/09/29 20:26:51</div>
<div class="t c13" style="left:635px;top:152px;color:#fff;font-size:13px;"><i>齿轮箱输入侧</i>3H</div>
<div class="t " style="right:1362px;top:179px;color:#fff;font-size:13px;">11.789</div>
<div class="t " style="right:1362px;top:236px;color:#fff;font-size:13px;">-14.472</div>
<div class="t " style="left:635px;top:200px;color:#fff;font-size:13px;">4.244m/s^2,0RPM</div>
<div class="t " style="left:635px;top:214.5px;color:#fff;font-size:13px;">2021/09/29 20:26:51</div>
<div class="t c13" style="left:635px;top:229px;color:#fff;font-size:13px;"><i>齿轮箱</i>1/2<i>轴输出侧</i>4A</div>
<div class="t " style="right:1362px;top:258px;color:#fff;font-size:13px;">6.43</div>
<div class="t " style="right:1362px;top:316px;color:#fff;font-size:13px;">-6.09</div>
<div class="t " style="left:635px;top:279px;color:#fff;font-size:13px;">1.826m/s^2,0RPM</div>
<div class="t " style="left:635px;top:293.5px;color:#fff;font-size:13px;">2021/09/29 20:26:51</div>
<div class="t c13" style="left:635px;top:308px;color:#fff;font-size:13px;"><i>齿轮箱</i>3/4<i>轴输入侧</i>5V</div>
<div class="t " style="right:1362px;top:336px;color:#fff;font-size:13px;">8.022</div>
<div class="t " style="right:1362px;top:393px;color:#fff;font-size:13px;">-6.796</div>
<div class="t " style="left:635px;top:357px;color:#fff;font-size:13px;">2.104m/s^2,0RPM</div>
<div class="t " style="left:635px;top:371.5px;color:#fff;font-size:13px;">2021/09/29 20:26:51</div>
<div class="t c13" style="left:635px;top:386px;color:#fff;font-size:13px;"><i>齿轮箱输出侧</i>6H</div>
<div class="t " style="left:112px;transform:translateX(-50%);top:416px;color:#fff;font-size:13px;">0ms</div>
<div class="t " style="left:212.4px;transform:translateX(-50%);top:416px;color:#fff;font-size:13px;">5000</div>
<div class="t " style="left:314px;transform:translateX(-50%);top:416px;color:#fff;font-size:13px;">10000</div>
<div class="t " style="left:415.6px;transform:translateX(-50%);top:416px;color:#fff;font-size:13px;">15000</div>
<div class="t " style="left:516.6px;transform:translateX(-50%);top:416px;color:#fff;font-size:13px;">20000</div>
<div class="t " style="left:630.5px;transform:translateX(-50%);top:416px;color:#fff;font-size:13px;">25600</div>
<div class="t" style="left:49px;top:230px;transform:translate(-50%,-50%) rotate(-90deg);color:#fff">[m/s^2]</div>
<div class="t " style="left:112px;top:128px;color:#e8e800;font-size:12.5px;">0ms,3.962m/s^2</div>
<div class="t " style="left:35px;top:467px;color:#fff;font-size:13px;">101<i>机头</i>2#<i>驱动部</i>\<i>齿轮箱输入侧</i>3H\128k <i>加速度波形</i>(0.1-2000).<i>采样值</i></div>
<div class="t " style="left:439px;top:467px;color:#fff;font-size:13px;">2021/09/29 20:26:51</div>
<div class="t " style="left:579px;top:467px;color:#fff;font-size:13px;">2.104m/s^2</div>
<div class="t " style="left:667px;top:467px;color:#fff;font-size:13px;">0RPM</div>
<div style="position:absolute;left:717px;top:467px;width:72px;height:16px;overflow:hidden"><div class="t" style="left:0;top:0;color:#fff">742.969Hz,0.829m/s^2</div></div>
<div class="t " style="right:1373px;top:540px;color:#fff;font-size:13px;">0.829</div>
<div class="t " style="right:1373px;top:596px;color:#fff;font-size:13px;">0</div>
<div class="t " style="left:655px;top:560px;color:#fff;font-size:13px;">2.664m/s^2,0RPM</div>
<div class="t " style="left:655px;top:574.5px;color:#fff;font-size:13px;">2021/09/29 20:26:51</div>
<div class="t c13" style="left:655px;top:589px;color:#fff;font-size:13px;"><i>齿轮箱输入侧</i>3H</div>
<div class="t " style="right:1373px;top:618px;color:#fff;font-size:13px;">2.43</div>
<div class="t " style="right:1373px;top:674px;color:#fff;font-size:13px;">0</div>
<div class="t " style="left:655px;top:638px;color:#fff;font-size:13px;">4.244m/s^2,0RPM</div>
<div class="t " style="left:655px;top:652.5px;color:#fff;font-size:13px;">2021/09/29 20:26:51</div>
<div class="t c13" style="left:655px;top:667px;color:#fff;font-size:13px;"><i>齿轮箱</i>1/2<i>轴输出侧</i>4A</div>
<div class="t " style="right:1373px;top:696px;color:#fff;font-size:13px;">0.916</div>
<div class="t " style="right:1373px;top:753px;color:#fff;font-size:13px;">0</div>
<div class="t " style="left:655px;top:716px;color:#fff;font-size:13px;">1.826m/s^2,0RPM</div>
<div class="t " style="left:655px;top:730.5px;color:#fff;font-size:13px;">2021/09/29 20:26:51</div>
<div class="t c13" style="left:655px;top:745px;color:#fff;font-size:13px;"><i>齿轮箱</i>3/4<i>轴输入侧</i>5V</div>
<div class="t " style="right:1373px;top:774px;color:#fff;font-size:13px;">1.133</div>
<div class="t " style="right:1373px;top:831px;color:#fff;font-size:13px;">0</div>
<div class="t " style="left:655px;top:794px;color:#fff;font-size:13px;">2.104m/s^2,0RPM</div>
<div class="t " style="left:655px;top:808.5px;color:#fff;font-size:13px;">2021/09/29 20:26:51</div>
<div class="t c13" style="left:655px;top:823px;color:#fff;font-size:13px;"><i>齿轮箱输出侧</i>6H</div>
<div class="t " style="left:100.0px;transform:translateX(-50%);top:855px;color:#fff;font-size:13px;">0Hz</div>
<div class="t " style="left:155.1px;transform:translateX(-50%);top:855px;color:#fff;font-size:13px;">200</div>
<div class="t " style="left:210.2px;transform:translateX(-50%);top:855px;color:#fff;font-size:13px;">400</div>
<div class="t " style="left:265.3px;transform:translateX(-50%);top:855px;color:#fff;font-size:13px;">600</div>
<div class="t " style="left:320.4px;transform:translateX(-50%);top:855px;color:#fff;font-size:13px;">800</div>
<div class="t " style="left:375.5px;transform:translateX(-50%);top:855px;color:#fff;font-size:13px;">1000</div>
<div class="t " style="left:430.6px;transform:translateX(-50%);top:855px;color:#fff;font-size:13px;">1200</div>
<div class="t " style="left:485.7px;transform:translateX(-50%);top:855px;color:#fff;font-size:13px;">1400</div>
<div class="t " style="left:540.8px;transform:translateX(-50%);top:855px;color:#fff;font-size:13px;">1600</div>
<div class="t " style="left:595.9000000000001px;transform:translateX(-50%);top:855px;color:#fff;font-size:13px;">1800</div>
<div class="t " style="left:651.0px;transform:translateX(-50%);top:855px;color:#fff;font-size:13px;">2000</div>
<div class="t" style="left:49px;top:668px;transform:translate(-50%,-50%) rotate(-90deg);color:#fff">[m/s^2]</div>
<div class="t " style="left:245px;top:529px;color:#ffff00;font-size:13px;"><i>二级啮合</i></div>
<div class="t " style="left:346px;top:501px;color:#ffff00;font-size:13px;"><i>一级啮合</i></div>
<div class="t " style="left:307px;top:541px;color:#ffff00;font-size:12px;text-shadow:1px 0 0 rgba(255,60,0,.5)">742.969Hz,0.829m/s^2</div>
<div class="t" style="left:313px;top:548px;transform:translate(-50%,-50%) rotate(90deg);color:#fff;font-size:12.3px">742.969Hz,4.3m/s^2</div>
<div class="t" style="left:517px;top:498px;transform:translate(-50%,-50%) rotate(90deg);color:#fff;font-size:10px;line-height:10px">2X</div>
<div class="t " style="left:511px;top:501px;color:#ffff00;font-size:17px;line-height:17px">2X</div>
<div class="t " style="left:824px;top:29px;color:#fff;font-size:13px;">101<i>机头</i>2#<i>驱动部</i>\<i>齿轮箱输入侧</i>3H\128k <i>加速度波形</i>(0.1-2000).<i>采样值</i></div>
<div class="t " style="right:22px;top:29px;color:#fff;font-size:13px;letter-spacing:-0.2px;">2021-09-29 20:26:51,2.66·<i>用时</i>:0ms</div>
<div class="t " style="right:605px;top:52px;color:#fff;font-size:13px;">5.922</div>
<div class="t " style="right:605px;top:102px;color:#fff;font-size:13px;">4</div>
<div class="t " style="right:605px;top:153px;color:#fff;font-size:13px;">2</div>
<div class="t " style="right:605px;top:204px;color:#fff;font-size:13px;">0.024</div>
<div class="t " style="left:869.5px;transform:translateX(-50%);top:221px;color:#fff;font-size:13px;">08/26</div>
<div class="t " style="left:934.7px;transform:translateX(-50%);top:221px;color:#fff;font-size:13px;">08/31</div>
<div class="t " style="left:1019px;transform:translateX(-50%);top:221px;color:#fff;font-size:13px;">09/06</div>
<div class="t " style="left:1103.3px;transform:translateX(-50%);top:221px;color:#fff;font-size:13px;">09/11</div>
<div class="t " style="left:1188.3px;transform:translateX(-50%);top:221px;color:#fff;font-size:13px;">09/17</div>
<div class="t " style="left:1272.3px;transform:translateX(-50%);top:221px;color:#fff;font-size:13px;">09/23</div>
<div class="t " style="left:1356.5px;transform:translateX(-50%);top:221px;color:#fff;font-size:13px;">09/29</div>
<div class="t " style="left:1419.6px;transform:translateX(-50%);top:221px;color:#fff;font-size:13px;">10/03</div>
<div class="t" style="right:103px;top:130px;color:#e4d000;font-size:11px;line-height:13px">(09/29 20:26:51, 2.664)</div>
<div class="t " style="left:824px;top:240px;color:#fff;font-size:13px;">101<i>机头</i>2#<i>驱动部</i>\<i>齿轮箱</i>1/2<i>轴输出侧</i>4A\128k <i>加速度波形</i>(0.1-2000).<i>采样值</i></div>
<div class="t " style="right:22px;top:240px;color:#fff;font-size:13px;letter-spacing:-0.2px;">2021-09-29 20:26:51<i>用时</i>:0ms</div>
<div class="t " style="right:605px;top:263px;color:#fff;font-size:13px;">6.662</div>
<div class="t " style="right:605px;top:324px;color:#fff;font-size:13px;">4</div>
<div class="t " style="right:605px;top:370px;color:#fff;font-size:13px;">2</div>
<div class="t " style="right:605px;top:416px;color:#fff;font-size:13px;">0.024</div>
<div class="t " style="left:869.5px;transform:translateX(-50%);top:431.4px;color:#fff;font-size:13px;">08/26</div>
<div class="t " style="left:934.7px;transform:translateX(-50%);top:431.4px;color:#fff;font-size:13px;">08/31</div>
<div class="t " style="left:1019px;transform:translateX(-50%);top:431.4px;color:#fff;font-size:13px;">09/06</div>
<div class="t " style="left:1103.3px;transform:translateX(-50%);top:431.4px;color:#fff;font-size:13px;">09/11</div>
<div class="t " style="left:1188.3px;transform:translateX(-50%);top:431.4px;color:#fff;font-size:13px;">09/17</div>
<div class="t " style="left:1272.3px;transform:translateX(-50%);top:431.4px;color:#fff;font-size:13px;">09/23</div>
<div class="t " style="left:1356.5px;transform:translateX(-50%);top:431.4px;color:#fff;font-size:13px;">09/29</div>
<div class="t " style="left:1419.6px;transform:translateX(-50%);top:431.4px;color:#fff;font-size:13px;">10/03</div>
<div class="t" style="right:103px;top:328px;color:#e4d000;font-size:11px;line-height:13px">(09/29 20:26:51, 4.244)</div>
<div class="t " style="left:824px;top:452px;color:#f4f8ff;font-size:13px;">101<i>机头</i>2#<i>驱动部</i>\<i>齿轮箱</i>3/4<i>轴输入侧</i>5V\128k <i>加速度波形</i>(0.1-2000).<i>采样值</i></div>
<div class="t " style="right:22px;top:452px;color:#fff;font-size:13px;letter-spacing:-0.2px;">2021-09-29 20:26:51<i>用时</i>:0ms</div>
<div class="t " style="right:600px;top:474px;color:#fff;font-size:13px;">3.049</div>
<div class="t " style="right:600px;top:525px;color:#fff;font-size:13px;">2</div>
<div class="t " style="right:600px;top:573px;color:#fff;font-size:13px;">1</div>
<div class="t " style="right:600px;top:624px;color:#fff;font-size:13px;">-0.082</div>
<div class="t " style="left:873px;transform:translateX(-50%);top:642.2px;color:#fff;font-size:13px;">08/26</div>
<div class="t " style="left:938.5px;transform:translateX(-50%);top:642.2px;color:#fff;font-size:13px;">08/31</div>
<div class="t " style="left:1106.5px;transform:translateX(-50%);top:642.2px;color:#fff;font-size:13px;">09/11</div>
<div class="t " style="left:1274.5px;transform:translateX(-50%);top:642.2px;color:#fff;font-size:13px;">09/23</div>
<div class="t " style="left:1419.6px;transform:translateX(-50%);top:642.2px;color:#fff;font-size:13px;">10/03</div>
<div class="t" style="right:103px;top:543px;color:#e4d000;font-size:11px;line-height:13px">(09/29 20:26:51, 1.826)</div>
<div class="t " style="left:824px;top:662px;color:#fff;font-size:13px;">101<i>机头</i>2#<i>驱动部</i>\<i>齿轮箱输出侧</i>6H\128k <i>加速度波形</i>(0.1-2000).<i>采样值</i></div>
<div class="t " style="right:22px;top:662px;color:#fff;font-size:13px;letter-spacing:-0.2px;">2021-09-29 20:26:51,2.10·<i>用时</i>:0ms</div>
<div class="t " style="right:605px;top:685px;color:#fff;font-size:13px;">5.096</div>
<div class="t " style="right:605px;top:718px;color:#fff;font-size:13px;">4</div>
<div class="t " style="right:605px;top:778px;color:#fff;font-size:13px;">2</div>
<div class="t " style="right:605px;top:837px;color:#fff;font-size:13px;">0.026</div>
<div class="t " style="left:869.5px;transform:translateX(-50%);top:853.5px;color:#fff;font-size:13px;">08/26</div>
<div class="t " style="left:934.7px;transform:translateX(-50%);top:853.5px;color:#fff;font-size:13px;">08/31</div>
<div class="t " style="left:1019px;transform:translateX(-50%);top:853.5px;color:#fff;font-size:13px;">09/06</div>
<div class="t " style="left:1103.3px;transform:translateX(-50%);top:853.5px;color:#fff;font-size:13px;">09/11</div>
<div class="t " style="left:1188.3px;transform:translateX(-50%);top:853.5px;color:#fff;font-size:13px;">09/17</div>
<div class="t " style="left:1272.3px;transform:translateX(-50%);top:853.5px;color:#fff;font-size:13px;">09/23</div>
<div class="t " style="left:1356.5px;transform:translateX(-50%);top:853.5px;color:#fff;font-size:13px;">09/29</div>
<div class="t " style="left:1419.6px;transform:translateX(-50%);top:853.5px;color:#fff;font-size:13px;">10/03</div>
<div class="t" style="right:103px;top:770px;color:#e4d000;font-size:11px;line-height:13px">(09/29 20:26:51, 2.104)</div>
</body></html>
